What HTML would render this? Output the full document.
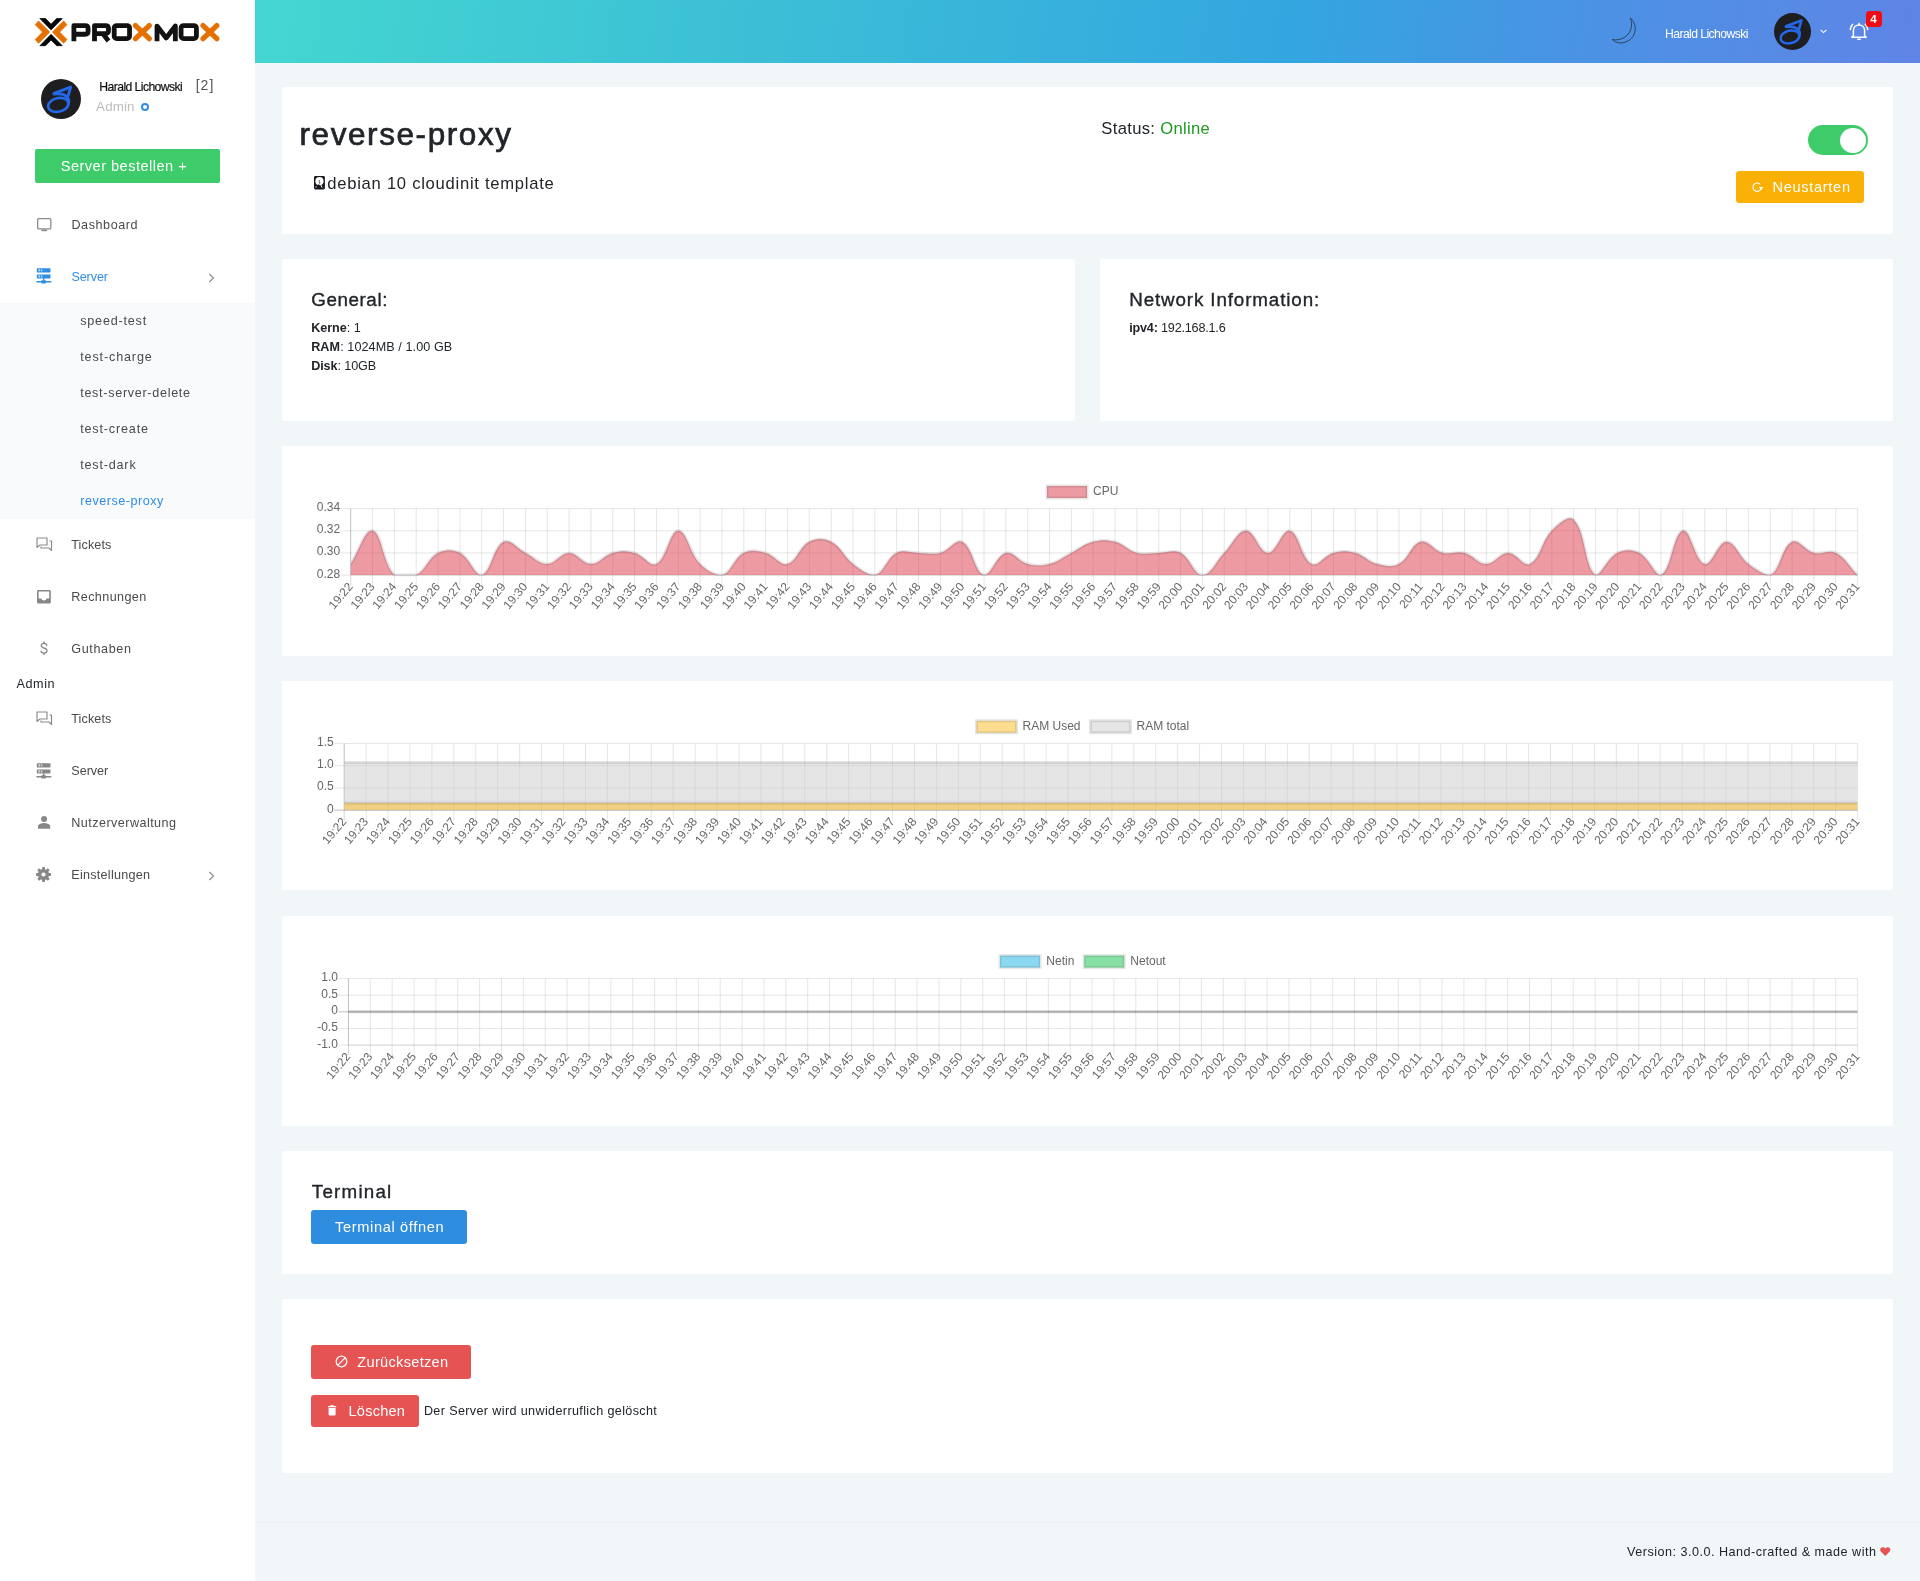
<!DOCTYPE html>
<html lang="de">
<head>
<meta charset="utf-8">
<title>reverse-proxy</title>
<style>
html,body{margin:0;padding:0}
body{width:1920px;height:1581px;position:relative;overflow:hidden;background:#f1f6f9;font-family:"Liberation Sans",sans-serif;color:#212529}
.abs{position:absolute}
.t{position:absolute;white-space:pre;font-family:"Liberation Sans",sans-serif}
.t b{font-weight:700}
.sidebar{position:absolute;left:0;top:0;width:255px;height:1581px;background:#fff}
.submenu{position:absolute;left:0;top:303px;width:255px;height:215.5px;background:#f9fafc}
.topbar{position:absolute;left:255px;top:0;width:1665px;height:63px;background:linear-gradient(100deg,#44d7d1 0%,#3cbfd6 30%,#33a6e0 62%,#4b92e4 80%,#5f84e6 100%)}
.card{position:absolute;background:#fff;border-radius:2px}
.btn{position:absolute;border-radius:3px}
.charts{position:absolute;left:0;top:0}
.layer{position:absolute;left:0;top:0;width:1920px;height:1581px;will-change:transform}
.footline{position:absolute;left:255px;top:1522px;width:1665px;height:1px;background:#eef1f3}
svg{overflow:visible}
</style>
</head>
<body>
<!-- sidebar -->
<div class="sidebar"></div>
<div class="submenu"></div>
<!--LOGO-->
<!-- top bar -->
<div class="topbar"></div>
<!-- cards -->
<div class="card" style="left:282px;top:87px;width:1611px;height:146.5px"></div>
<div class="card" style="left:282px;top:259px;width:793px;height:161.5px"></div>
<div class="card" style="left:1100px;top:259px;width:793px;height:161.5px"></div>
<div class="card" style="left:282px;top:446px;width:1611px;height:209.6px"></div>
<div class="card" style="left:282px;top:680.8px;width:1611px;height:209.6px"></div>
<div class="card" style="left:282px;top:915.6px;width:1611px;height:210px"></div>
<div class="card" style="left:282px;top:1151px;width:1611px;height:122.6px"></div>
<div class="card" style="left:282px;top:1299.3px;width:1611px;height:173.500px"></div>
<div class="footline"></div>
<!-- buttons -->
<div class="btn" style="left:35px;top:149.3px;width:185px;height:33.4px;background:#3ecc6b;border-radius:2px"></div>
<div class="btn" style="left:1736px;top:171px;width:128px;height:32px;background:#fbb005"></div>
<div class="btn" style="left:311px;top:1210px;width:156px;height:33.7px;background:#2f8de0"></div>
<div class="btn" style="left:311px;top:1344.8px;width:160px;height:34px;background:#e55353"></div>
<div class="btn" style="left:311px;top:1394.9px;width:108px;height:32.200px;background:#e55353"></div>
<!-- toggle -->
<div class="abs" style="left:1808px;top:124.8px;width:60px;height:30.2px;border-radius:16px;background:#3ecc6b"></div>
<div class="abs" style="left:1840px;top:127.5px;width:26px;height:25.6px;border-radius:13px;background:#fff"></div>
<!-- logo -->
<svg class="abs" style="left:0;top:0" width="255" height="63" viewBox="0 0 255 63">
 <g fill="#e57000" stroke="#e57000" stroke-width="0.9" stroke-linejoin="round">
  <polygon points="49.70,32.10 38.50,21.00 35.30,24.70 42.60,32.10 35.30,39.50 38.50,43.20"/>
  <polygon points="52.46,32.10 63.66,21.00 66.86,24.70 59.56,32.10 66.86,39.50 63.66,43.20"/>
 </g>
 <g fill="#000" stroke="#000" stroke-width="0.7" stroke-linejoin="round">
  <polygon points="39.90,18.50 45.50,18.50 51.08,24.20 56.66,18.50 62.26,18.50 51.08,29.90"/>
  <polygon points="39.90,45.70 45.50,45.70 51.08,40.00 56.66,45.70 62.26,45.70 51.08,34.30"/>
 </g>
</svg>
<svg class="abs" style="left:20px;top:10px" width="220" height="45" viewBox="0 0 1920 393">
 <g fill="none" stroke="#111" stroke-width="42" stroke-linejoin="round">
  <path d="M470,272V136H568Q594,136 594,160V186Q594,212 568,212H470"/>
  <path d="M650,272V136H746Q772,136 772,160V182Q772,206 746,206H650M722,206L772,270"/>
  <rect x="822" y="136" width="134" height="114" rx="22"/>
  <path d="M1196,272V140L1276,244L1356,140V272"/>
  <rect x="1406" y="136" width="134" height="114" rx="22"/>
 </g>
 <g fill="none" stroke="#e57000" stroke-width="46" stroke-linecap="round">
  <path d="M1008,136L1128,250M1128,136L1008,250"/>
  <path d="M1598,136L1718,250M1718,136L1598,250"/>
 </g>
</svg>
<!-- sidebar avatar -->
<svg class="abs" style="left:41px;top:79px" width="40" height="40" viewBox="0 0 40 40">
 <circle cx="20" cy="20" r="20" fill="#1e1e20"/>
 <g id="swirl" fill="none" stroke="#2467e8" stroke-linecap="round" stroke-linejoin="round">
  <ellipse cx="17.300" cy="25.900" rx="10.300" ry="6.800" transform="rotate(-13 17.300 25.900)" stroke-width="2.700"/>
  <path d="M13.200,15C18.500,14.400 23,15.200 25.600,17.600C27.600,19.600 28.100,22.400 27.200,24.800" stroke-width="3.100"/>
  <path d="M13,14.400L29.600,8.100L27.300,16.400" stroke-width="2.900"/>
 </g>
</svg>
<!-- blue ring -->
<div class="abs" style="left:140.9px;top:103px;width:4px;height:4px;border:2px solid #2f8de4;border-radius:50%"></div>
<!-- topbar avatar -->
<svg class="abs" style="left:1774px;top:12.6px" width="37" height="37" viewBox="0 0 40 40">
 <circle cx="20" cy="20" r="20" fill="#1e1e20"/>
 <use href="#swirl"/>
</svg>
<!-- moon -->
<svg class="abs" style="left:1610px;top:16px" width="30" height="30" viewBox="0 0 30 30">
 <path d="M20.300,1.900C27.800,8.600 26.800,20.600 17.200,25.400C11.600,28.100 5.600,27 2.200,23.500C11.300,25.600 20.600,19.400 21.500,10.200C21.800,7 21.300,4 20.300,1.900Z" fill="none" stroke="#2b3a4a" stroke-width="0.900" stroke-linejoin="round"/>
</svg>
<!-- chevron down -->
<svg class="abs" style="left:1819.5px;top:28.5px" width="7" height="5" viewBox="0 0 7 5"><path d="M0.6,0.8L3.5,3.6L6.4,0.8" fill="none" stroke="#fff" stroke-width="1.1"/></svg>
<!-- bell -->
<svg class="abs" style="left:1849px;top:22px" width="20" height="19" viewBox="0 0 20 19">
 <g fill="none" stroke="#fff" stroke-width="1.5" stroke-linecap="round" stroke-linejoin="round">
  <path d="M4.4,14V8.6C4.4,5.2 6.8,3 10,3C13.200,3 15.600,5.200 15.600,8.600V14L17.200,15.200H2.800Z"/>
  <path d="M10,3V1.600"/>
  <path d="M8.800,17.200H11.200"/>
  <path d="M3.600,2.400C2.200,3.800 1.400,5.600 1.300,7.600"/>
  <path d="M16.400,2.400C17.800,3.800 18.600,5.600 18.700,7.600"/>
 </g>
</svg>
<!-- badge -->
<div class="abs" style="left:1866px;top:11px;width:16px;height:16px;border-radius:3.5px;background:#f00c14"></div>
<!-- menu icons -->
<!-- dashboard monitor -->
<svg class="abs" style="left:36.800px;top:217.600px" width="14.600" height="13.400" viewBox="0 0 14.600 13.400">
 <rect x="0.650" y="0.650" width="13.200" height="10.300" rx="1" fill="none" stroke="#8a8a8a" stroke-width="1.300"/>
 <rect x="4.300" y="11.500" width="5.900" height="1.700" fill="#8a8a8a"/>
</svg>
<!-- server network (blue) -->
<svg class="abs" style="left:36px;top:268.100px" width="16" height="16" viewBox="0 0 16 16">
 <g fill="#2f8de4">
  <rect x="0.8" y="0.2" width="13.7" height="4.3" rx="0.7"/>
  <rect x="0.8" y="6.4" width="13.7" height="4.1" rx="0.7"/>
  <rect x="6.9" y="10.4" width="1.5" height="3"/>
  <rect x="0.3" y="13.0" width="15.1" height="1.4" rx="0.4"/>
  <rect x="5.3" y="12.2" width="4.6" height="3.4" rx="0.6"/>
 </g>
 <g fill="#fff"><rect x="2.6" y="1.3" width="1.1" height="2.1"/><rect x="4.8" y="1.3" width="1.5" height="2.1" opacity="0.6"/><rect x="2.6" y="7.4" width="1.1" height="2.1"/><rect x="4.8" y="7.4" width="1.5" height="2.1" opacity="0.6"/></g>
</svg>
<!-- server network (gray) -->
<svg class="abs" style="left:36.200px;top:762.600px" width="16" height="16" viewBox="0 0 16 16">
 <g fill="#878787">
  <rect x="0.8" y="0.2" width="13.7" height="4.3" rx="0.7"/>
  <rect x="0.8" y="6.4" width="13.7" height="4.1" rx="0.7"/>
  <rect x="6.9" y="10.4" width="1.5" height="3"/>
  <rect x="0.3" y="13.0" width="15.1" height="1.4" rx="0.4"/>
  <rect x="5.3" y="12.2" width="4.6" height="3.4" rx="0.6"/>
 </g>
 <g fill="#fff"><rect x="2.6" y="1.3" width="1.1" height="2.1"/><rect x="4.8" y="1.3" width="1.5" height="2.1" opacity="0.6"/><rect x="2.6" y="7.4" width="1.1" height="2.1"/><rect x="4.8" y="7.4" width="1.5" height="2.1" opacity="0.6"/></g>
</svg>
<!-- tickets (forum outline) x2 -->
<svg class="abs" style="left:36px;top:537px" width="16.500" height="14" viewBox="0 0 33 28" id="forum">
 <g fill="none" stroke="#8a8a8a" stroke-width="2.300" stroke-linejoin="round">
  <path d="M2,2H22V16H8L2,21Z"/>
  <path d="M27,8H31V27L26,22H10V19"/>
 </g>
</svg>
<svg class="abs" style="left:36px;top:711px" width="16.500" height="14" viewBox="0 0 33 28">
 <g fill="none" stroke="#8a8a8a" stroke-width="2.300" stroke-linejoin="round">
  <path d="M2,2H22V16H8L2,21Z"/>
  <path d="M27,8H31V27L26,22H10V19"/>
 </g>
</svg>
<!-- rechnungen (inbox) -->
<svg class="abs" style="left:37.300px;top:589.600px" width="13.800" height="13.600" viewBox="0 0 138 136">
 <path d="M14,0H124Q138,0 138,14V122Q138,136 124,136H14Q0,136 0,122V14Q0,0 14,0ZM16,16V86H44C44,112 94,112 94,86H122V16Z" fill="#878787" fill-rule="evenodd"/>
</svg>
<!-- guthaben $ -->
<svg class="abs" style="left:39.700px;top:640.900px" width="8" height="14.400" viewBox="0 0 8 14.400">
 <g fill="none" stroke="#868686" stroke-width="1.250">
  <path d="M6.850,4.700C6.700,3.250 5.600,2.400 4,2.400C2.300,2.400 1.200,3.300 1.200,4.600C1.200,6 2.400,6.550 4.100,7.050C5.900,7.600 7,8.300 7,9.800C7,11.200 5.800,12.050 4,12.050C2.200,12.050 1,11.200 0.900,9.700"/>
  <path d="M4,0.300V2.400M4,12.050V14.100"/>
 </g>
</svg>
<!-- nutzer (person) -->
<svg class="abs" style="left:38px;top:816px" width="12.200" height="12.800" viewBox="0 0 122 128">
 <circle cx="61" cy="30" r="30" fill="#878787"/>
 <path d="M0,128V104C0,80 40,70 61,70C82,70 122,80 122,104V128Z" fill="#878787"/>
</svg>
<!-- settings gear -->
<svg class="abs" style="left:36px;top:867px" width="15" height="15" viewBox="-50 -50 100 100">
 <g fill="#878787">
  <circle r="37"/>
  <g id="teeth"><rect x="-9.500" y="-50" width="19" height="100" rx="3"/></g>
  <use href="#teeth" transform="rotate(45)"/><use href="#teeth" transform="rotate(90)"/><use href="#teeth" transform="rotate(135)"/>
 </g>
 <circle r="14" fill="#fff"/>
</svg>
<!-- chevrons right -->
<svg class="abs" style="left:207.500px;top:272.500px" width="7" height="10" viewBox="0 0 7 10"><path d="M1.300,1L5.600,5L1.300,9" fill="none" stroke="#8a8a8a" stroke-width="1.100"/></svg>
<svg class="abs" style="left:207.500px;top:870.500px" width="7" height="10" viewBox="0 0 7 10"><path d="M1.300,1L5.600,5L1.300,9" fill="none" stroke="#8a8a8a" stroke-width="1.100"/></svg>
<!-- template icon (hdd) -->
<svg class="abs" style="left:313.800px;top:176.300px" width="10.900" height="13.400" viewBox="0 0 110 135" preserveAspectRatio="none">
 <path d="M14,0H96Q110,0 110,14V121Q110,135 96,135H14Q0,135 0,121V14Q0,0 14,0Z" fill="#16191d"/>
 <circle cx="55" cy="52" r="41" fill="#fff"/>
 <circle cx="54" cy="50" r="6" fill="#16191d"/>
 <circle cx="57" cy="71" r="8" fill="#16191d"/>
 <path d="M5,122L50,80L70,122Z" fill="#16191d"/>
 <path d="M61,75L80,113" stroke="#fff" stroke-width="10" stroke-linecap="round"/>
 <rect x="12" y="106" width="16" height="8" fill="#fff"/>
</svg>
<!-- neustarten icon -->
<svg class="abs" style="left:1750.500px;top:180.500px" width="13" height="13" viewBox="0 0 13 13">
 <path d="M10.200,7.200A4.200,4.200 0 1 1 9.300,3.400" fill="none" stroke="#fff" stroke-width="1.150"/>
 <path d="M7.800,6.100H12.400L10.100,9Z" fill="#fff"/>
</svg>
<!-- zuruecksetzen icon -->
<svg class="abs" style="left:335px;top:1355.300px" width="13" height="13" viewBox="0 0 13 13">
 <circle cx="6.500" cy="6.500" r="5.300" fill="none" stroke="#fff" stroke-width="1.300"/>
 <path d="M2.900,10.100L10.100,2.900" stroke="#fff" stroke-width="1.300"/>
</svg>
<!-- loeschen icon -->
<svg class="abs" style="left:328.200px;top:1405px" width="8.200" height="10.600" viewBox="0 0 84 116" preserveAspectRatio="none">
 <path d="M0,12H24L30,0H54L60,12H84V24H0Z" fill="#fff"/>
 <path d="M6,32H78V104Q78,116 66,116H18Q6,116 6,104Z" fill="#fff"/>
</svg>
<!-- heart -->
<svg class="abs" style="left:1880px;top:1546.800px" width="10.500" height="9.200" viewBox="0 0 22 20" preserveAspectRatio="none">
 <path d="M11,19.500L2.200,10.600C-0.600,7.800 -0.300,3.600 2.400,1.600C5.100,-0.400 8.800,0.300 11,3.400C13.200,0.300 16.900,-0.400 19.600,1.600C22.300,3.600 22.600,7.800 19.800,10.600Z" fill="#e55353"/>
</svg>

<div class="layer">
<svg class="charts" width="1920" height="1581" viewBox="0 0 1920 1581" font-family="'Liberation Sans', sans-serif" font-size="12" fill="#666">
<g id="c1">
<clipPath id="clipc1"><rect x="350.7" y="507.1" width="1506.8999999999999" height="69.5"/></clipPath>
<line x1="350.70" x2="350.70" y1="508.60" y2="585.10" stroke="rgba(0,0,0,0.17)" stroke-width="1"/>
<line x1="372.54" x2="372.54" y1="508.60" y2="585.10" stroke="rgba(0,0,0,0.1)" stroke-width="1"/>
<line x1="394.38" x2="394.38" y1="508.60" y2="585.10" stroke="rgba(0,0,0,0.1)" stroke-width="1"/>
<line x1="416.22" x2="416.22" y1="508.60" y2="585.10" stroke="rgba(0,0,0,0.1)" stroke-width="1"/>
<line x1="438.06" x2="438.06" y1="508.60" y2="585.10" stroke="rgba(0,0,0,0.1)" stroke-width="1"/>
<line x1="459.90" x2="459.90" y1="508.60" y2="585.10" stroke="rgba(0,0,0,0.1)" stroke-width="1"/>
<line x1="481.73" x2="481.73" y1="508.60" y2="585.10" stroke="rgba(0,0,0,0.1)" stroke-width="1"/>
<line x1="503.57" x2="503.57" y1="508.60" y2="585.10" stroke="rgba(0,0,0,0.1)" stroke-width="1"/>
<line x1="525.41" x2="525.41" y1="508.60" y2="585.10" stroke="rgba(0,0,0,0.1)" stroke-width="1"/>
<line x1="547.25" x2="547.25" y1="508.60" y2="585.10" stroke="rgba(0,0,0,0.1)" stroke-width="1"/>
<line x1="569.09" x2="569.09" y1="508.60" y2="585.10" stroke="rgba(0,0,0,0.1)" stroke-width="1"/>
<line x1="590.93" x2="590.93" y1="508.60" y2="585.10" stroke="rgba(0,0,0,0.1)" stroke-width="1"/>
<line x1="612.77" x2="612.77" y1="508.60" y2="585.10" stroke="rgba(0,0,0,0.1)" stroke-width="1"/>
<line x1="634.61" x2="634.61" y1="508.60" y2="585.10" stroke="rgba(0,0,0,0.1)" stroke-width="1"/>
<line x1="656.45" x2="656.45" y1="508.60" y2="585.10" stroke="rgba(0,0,0,0.1)" stroke-width="1"/>
<line x1="678.29" x2="678.29" y1="508.60" y2="585.10" stroke="rgba(0,0,0,0.1)" stroke-width="1"/>
<line x1="700.13" x2="700.13" y1="508.60" y2="585.10" stroke="rgba(0,0,0,0.1)" stroke-width="1"/>
<line x1="721.97" x2="721.97" y1="508.60" y2="585.10" stroke="rgba(0,0,0,0.1)" stroke-width="1"/>
<line x1="743.80" x2="743.80" y1="508.60" y2="585.10" stroke="rgba(0,0,0,0.1)" stroke-width="1"/>
<line x1="765.64" x2="765.64" y1="508.60" y2="585.10" stroke="rgba(0,0,0,0.1)" stroke-width="1"/>
<line x1="787.48" x2="787.48" y1="508.60" y2="585.10" stroke="rgba(0,0,0,0.1)" stroke-width="1"/>
<line x1="809.32" x2="809.32" y1="508.60" y2="585.10" stroke="rgba(0,0,0,0.1)" stroke-width="1"/>
<line x1="831.16" x2="831.16" y1="508.60" y2="585.10" stroke="rgba(0,0,0,0.1)" stroke-width="1"/>
<line x1="853.00" x2="853.00" y1="508.60" y2="585.10" stroke="rgba(0,0,0,0.1)" stroke-width="1"/>
<line x1="874.84" x2="874.84" y1="508.60" y2="585.10" stroke="rgba(0,0,0,0.1)" stroke-width="1"/>
<line x1="896.68" x2="896.68" y1="508.60" y2="585.10" stroke="rgba(0,0,0,0.1)" stroke-width="1"/>
<line x1="918.52" x2="918.52" y1="508.60" y2="585.10" stroke="rgba(0,0,0,0.1)" stroke-width="1"/>
<line x1="940.36" x2="940.36" y1="508.60" y2="585.10" stroke="rgba(0,0,0,0.1)" stroke-width="1"/>
<line x1="962.20" x2="962.20" y1="508.60" y2="585.10" stroke="rgba(0,0,0,0.1)" stroke-width="1"/>
<line x1="984.03" x2="984.03" y1="508.60" y2="585.10" stroke="rgba(0,0,0,0.1)" stroke-width="1"/>
<line x1="1005.87" x2="1005.87" y1="508.60" y2="585.10" stroke="rgba(0,0,0,0.1)" stroke-width="1"/>
<line x1="1027.71" x2="1027.71" y1="508.60" y2="585.10" stroke="rgba(0,0,0,0.1)" stroke-width="1"/>
<line x1="1049.55" x2="1049.55" y1="508.60" y2="585.10" stroke="rgba(0,0,0,0.1)" stroke-width="1"/>
<line x1="1071.39" x2="1071.39" y1="508.60" y2="585.10" stroke="rgba(0,0,0,0.1)" stroke-width="1"/>
<line x1="1093.23" x2="1093.23" y1="508.60" y2="585.10" stroke="rgba(0,0,0,0.1)" stroke-width="1"/>
<line x1="1115.07" x2="1115.07" y1="508.60" y2="585.10" stroke="rgba(0,0,0,0.1)" stroke-width="1"/>
<line x1="1136.91" x2="1136.91" y1="508.60" y2="585.10" stroke="rgba(0,0,0,0.1)" stroke-width="1"/>
<line x1="1158.75" x2="1158.75" y1="508.60" y2="585.10" stroke="rgba(0,0,0,0.1)" stroke-width="1"/>
<line x1="1180.59" x2="1180.59" y1="508.60" y2="585.10" stroke="rgba(0,0,0,0.1)" stroke-width="1"/>
<line x1="1202.43" x2="1202.43" y1="508.60" y2="585.10" stroke="rgba(0,0,0,0.1)" stroke-width="1"/>
<line x1="1224.27" x2="1224.27" y1="508.60" y2="585.10" stroke="rgba(0,0,0,0.1)" stroke-width="1"/>
<line x1="1246.10" x2="1246.10" y1="508.60" y2="585.10" stroke="rgba(0,0,0,0.1)" stroke-width="1"/>
<line x1="1267.94" x2="1267.94" y1="508.60" y2="585.10" stroke="rgba(0,0,0,0.1)" stroke-width="1"/>
<line x1="1289.78" x2="1289.78" y1="508.60" y2="585.10" stroke="rgba(0,0,0,0.1)" stroke-width="1"/>
<line x1="1311.62" x2="1311.62" y1="508.60" y2="585.10" stroke="rgba(0,0,0,0.1)" stroke-width="1"/>
<line x1="1333.46" x2="1333.46" y1="508.60" y2="585.10" stroke="rgba(0,0,0,0.1)" stroke-width="1"/>
<line x1="1355.30" x2="1355.30" y1="508.60" y2="585.10" stroke="rgba(0,0,0,0.1)" stroke-width="1"/>
<line x1="1377.14" x2="1377.14" y1="508.60" y2="585.10" stroke="rgba(0,0,0,0.1)" stroke-width="1"/>
<line x1="1398.98" x2="1398.98" y1="508.60" y2="585.10" stroke="rgba(0,0,0,0.1)" stroke-width="1"/>
<line x1="1420.82" x2="1420.82" y1="508.60" y2="585.10" stroke="rgba(0,0,0,0.1)" stroke-width="1"/>
<line x1="1442.66" x2="1442.66" y1="508.60" y2="585.10" stroke="rgba(0,0,0,0.1)" stroke-width="1"/>
<line x1="1464.50" x2="1464.50" y1="508.60" y2="585.10" stroke="rgba(0,0,0,0.1)" stroke-width="1"/>
<line x1="1486.33" x2="1486.33" y1="508.60" y2="585.10" stroke="rgba(0,0,0,0.1)" stroke-width="1"/>
<line x1="1508.17" x2="1508.17" y1="508.60" y2="585.10" stroke="rgba(0,0,0,0.1)" stroke-width="1"/>
<line x1="1530.01" x2="1530.01" y1="508.60" y2="585.10" stroke="rgba(0,0,0,0.1)" stroke-width="1"/>
<line x1="1551.85" x2="1551.85" y1="508.60" y2="585.10" stroke="rgba(0,0,0,0.1)" stroke-width="1"/>
<line x1="1573.69" x2="1573.69" y1="508.60" y2="585.10" stroke="rgba(0,0,0,0.1)" stroke-width="1"/>
<line x1="1595.53" x2="1595.53" y1="508.60" y2="585.10" stroke="rgba(0,0,0,0.1)" stroke-width="1"/>
<line x1="1617.37" x2="1617.37" y1="508.60" y2="585.10" stroke="rgba(0,0,0,0.1)" stroke-width="1"/>
<line x1="1639.21" x2="1639.21" y1="508.60" y2="585.10" stroke="rgba(0,0,0,0.1)" stroke-width="1"/>
<line x1="1661.05" x2="1661.05" y1="508.60" y2="585.10" stroke="rgba(0,0,0,0.1)" stroke-width="1"/>
<line x1="1682.89" x2="1682.89" y1="508.60" y2="585.10" stroke="rgba(0,0,0,0.1)" stroke-width="1"/>
<line x1="1704.73" x2="1704.73" y1="508.60" y2="585.10" stroke="rgba(0,0,0,0.1)" stroke-width="1"/>
<line x1="1726.57" x2="1726.57" y1="508.60" y2="585.10" stroke="rgba(0,0,0,0.1)" stroke-width="1"/>
<line x1="1748.40" x2="1748.40" y1="508.60" y2="585.10" stroke="rgba(0,0,0,0.1)" stroke-width="1"/>
<line x1="1770.24" x2="1770.24" y1="508.60" y2="585.10" stroke="rgba(0,0,0,0.1)" stroke-width="1"/>
<line x1="1792.08" x2="1792.08" y1="508.60" y2="585.10" stroke="rgba(0,0,0,0.1)" stroke-width="1"/>
<line x1="1813.92" x2="1813.92" y1="508.60" y2="585.10" stroke="rgba(0,0,0,0.1)" stroke-width="1"/>
<line x1="1835.76" x2="1835.76" y1="508.60" y2="585.10" stroke="rgba(0,0,0,0.1)" stroke-width="1"/>
<line x1="1857.60" x2="1857.60" y1="508.60" y2="585.10" stroke="rgba(0,0,0,0.1)" stroke-width="1"/>
<line x1="340.70" x2="1857.60" y1="508.60" y2="508.60" stroke="rgba(0,0,0,0.1)" stroke-width="1"/>
<line x1="340.70" x2="1857.60" y1="530.77" y2="530.77" stroke="rgba(0,0,0,0.1)" stroke-width="1"/>
<line x1="340.70" x2="1857.60" y1="552.93" y2="552.93" stroke="rgba(0,0,0,0.1)" stroke-width="1"/>
<line x1="340.70" x2="1857.60" y1="575.10" y2="575.10" stroke="rgba(0,0,0,0.1)" stroke-width="1"/>
<line x1="350.70" x2="350.70" y1="508.60" y2="575.10" stroke="rgba(0,0,0,0.1)" stroke-width="1"/>
<line x1="350.70" x2="1857.60" y1="575.10" y2="575.10" stroke="rgba(0,0,0,0.1)" stroke-width="1"/>
<g clip-path="url(#clipc1)">
<path d="M350.70,564.02C359.44,550.72 364.75,528.79 372.54,530.77C382.22,533.22 382.26,562.80 394.38,575.10C399.73,575.10 409.01,575.10 416.22,575.10C426.48,569.89 427.79,558.14 438.06,552.93C445.26,549.28 452.69,549.28 459.90,552.93C470.16,558.14 474.07,575.10 481.73,575.10C491.54,572.61 492.76,547.34 503.57,541.85C510.23,538.47 516.68,548.50 525.41,552.93C534.15,557.37 538.52,564.02 547.25,564.02C555.99,564.02 560.36,552.93 569.09,552.93C577.83,552.93 582.19,564.02 590.93,564.02C599.67,564.02 603.53,555.28 612.77,552.93C621.01,550.84 626.37,550.84 634.61,552.93C643.84,555.28 649.79,567.40 656.45,564.02C667.26,558.53 669.55,530.77 678.29,530.77C687.02,530.77 689.31,553.04 700.13,564.02C706.78,570.77 714.27,575.10 721.97,575.10C731.74,572.62 733.54,558.14 743.80,552.93C751.01,549.28 757.41,550.84 765.64,552.93C774.88,555.28 779.79,565.97 787.48,564.02C797.26,561.54 799.06,547.06 809.32,541.85C816.53,538.19 823.96,538.19 831.16,541.85C841.43,547.06 843.22,556.57 853.00,564.02C860.69,569.87 867.14,575.10 874.84,575.10C884.62,572.62 886.41,558.14 896.68,552.93C903.88,549.28 909.78,552.93 918.52,552.93C927.25,552.93 932.12,555.02 940.36,552.93C949.59,550.59 955.54,538.47 962.20,541.85C973.01,547.34 974.23,572.61 984.03,575.10C991.70,575.10 996.10,555.41 1005.87,552.93C1013.57,550.98 1018.48,561.67 1027.71,564.02C1035.95,566.11 1041.32,566.11 1049.55,564.02C1058.79,561.67 1062.66,557.37 1071.39,552.93C1080.13,548.50 1083.99,544.19 1093.23,541.85C1101.47,539.76 1106.83,539.76 1115.07,541.85C1124.31,544.19 1127.67,550.59 1136.91,552.93C1145.14,555.02 1150.01,552.93 1158.75,552.93C1167.48,552.93 1173.38,549.28 1180.59,552.93C1190.85,558.14 1193.69,575.10 1202.43,575.10C1211.16,575.10 1215.53,561.80 1224.27,552.93C1233.00,544.07 1237.37,530.77 1246.10,530.77C1254.84,530.77 1259.21,552.93 1267.94,552.93C1276.68,552.93 1282.11,528.82 1289.78,530.77C1299.59,533.25 1300.81,558.53 1311.62,564.02C1318.28,567.40 1324.23,555.28 1333.46,552.93C1341.70,550.84 1347.06,550.84 1355.30,552.93C1364.54,555.28 1367.90,561.67 1377.14,564.02C1385.37,566.11 1391.77,567.67 1398.98,564.02C1409.24,558.81 1411.04,544.33 1420.82,541.85C1428.51,539.90 1433.42,550.59 1442.66,552.93C1450.89,555.02 1456.26,550.84 1464.50,552.93C1473.73,555.28 1477.60,564.02 1486.33,564.02C1495.07,564.02 1499.44,552.93 1508.17,552.93C1516.91,552.93 1523.36,567.40 1530.01,564.02C1540.83,558.53 1541.04,541.74 1551.85,530.77C1558.51,524.01 1568.60,514.52 1573.69,519.68C1586.07,532.25 1584.05,566.36 1595.53,575.10C1601.53,575.10 1607.10,558.14 1617.37,552.93C1624.57,549.28 1632.00,549.28 1639.21,552.93C1649.47,558.14 1654.30,575.10 1661.05,575.10C1671.77,569.66 1673.21,533.22 1682.89,530.77C1690.68,528.79 1694.92,561.53 1704.73,564.02C1712.39,565.96 1717.83,541.85 1726.57,541.85C1735.30,541.85 1738.63,556.57 1748.40,564.02C1756.10,569.87 1763.59,575.10 1770.24,575.10C1781.06,569.61 1781.27,547.34 1792.08,541.85C1798.74,538.47 1804.69,550.59 1813.92,552.93C1822.16,555.02 1828.56,549.28 1835.76,552.93C1846.03,558.14 1848.86,566.23 1857.60,575.10L1857.60,575.10L350.70,575.10Z" fill="rgba(220,53,69,0.5)"/>
<path d="M350.70,564.02C359.44,550.72 364.75,528.79 372.54,530.77C382.22,533.22 382.26,562.80 394.38,575.10C399.73,575.10 409.01,575.10 416.22,575.10C426.48,569.89 427.79,558.14 438.06,552.93C445.26,549.28 452.69,549.28 459.90,552.93C470.16,558.14 474.07,575.10 481.73,575.10C491.54,572.61 492.76,547.34 503.57,541.85C510.23,538.47 516.68,548.50 525.41,552.93C534.15,557.37 538.52,564.02 547.25,564.02C555.99,564.02 560.36,552.93 569.09,552.93C577.83,552.93 582.19,564.02 590.93,564.02C599.67,564.02 603.53,555.28 612.77,552.93C621.01,550.84 626.37,550.84 634.61,552.93C643.84,555.28 649.79,567.40 656.45,564.02C667.26,558.53 669.55,530.77 678.29,530.77C687.02,530.77 689.31,553.04 700.13,564.02C706.78,570.77 714.27,575.10 721.97,575.10C731.74,572.62 733.54,558.14 743.80,552.93C751.01,549.28 757.41,550.84 765.64,552.93C774.88,555.28 779.79,565.97 787.48,564.02C797.26,561.54 799.06,547.06 809.32,541.85C816.53,538.19 823.96,538.19 831.16,541.85C841.43,547.06 843.22,556.57 853.00,564.02C860.69,569.87 867.14,575.10 874.84,575.10C884.62,572.62 886.41,558.14 896.68,552.93C903.88,549.28 909.78,552.93 918.52,552.93C927.25,552.93 932.12,555.02 940.36,552.93C949.59,550.59 955.54,538.47 962.20,541.85C973.01,547.34 974.23,572.61 984.03,575.10C991.70,575.10 996.10,555.41 1005.87,552.93C1013.57,550.98 1018.48,561.67 1027.71,564.02C1035.95,566.11 1041.32,566.11 1049.55,564.02C1058.79,561.67 1062.66,557.37 1071.39,552.93C1080.13,548.50 1083.99,544.19 1093.23,541.85C1101.47,539.76 1106.83,539.76 1115.07,541.85C1124.31,544.19 1127.67,550.59 1136.91,552.93C1145.14,555.02 1150.01,552.93 1158.75,552.93C1167.48,552.93 1173.38,549.28 1180.59,552.93C1190.85,558.14 1193.69,575.10 1202.43,575.10C1211.16,575.10 1215.53,561.80 1224.27,552.93C1233.00,544.07 1237.37,530.77 1246.10,530.77C1254.84,530.77 1259.21,552.93 1267.94,552.93C1276.68,552.93 1282.11,528.82 1289.78,530.77C1299.59,533.25 1300.81,558.53 1311.62,564.02C1318.28,567.40 1324.23,555.28 1333.46,552.93C1341.70,550.84 1347.06,550.84 1355.30,552.93C1364.54,555.28 1367.90,561.67 1377.14,564.02C1385.37,566.11 1391.77,567.67 1398.98,564.02C1409.24,558.81 1411.04,544.33 1420.82,541.85C1428.51,539.90 1433.42,550.59 1442.66,552.93C1450.89,555.02 1456.26,550.84 1464.50,552.93C1473.73,555.28 1477.60,564.02 1486.33,564.02C1495.07,564.02 1499.44,552.93 1508.17,552.93C1516.91,552.93 1523.36,567.40 1530.01,564.02C1540.83,558.53 1541.04,541.74 1551.85,530.77C1558.51,524.01 1568.60,514.52 1573.69,519.68C1586.07,532.25 1584.05,566.36 1595.53,575.10C1601.53,575.10 1607.10,558.14 1617.37,552.93C1624.57,549.28 1632.00,549.28 1639.21,552.93C1649.47,558.14 1654.30,575.10 1661.05,575.10C1671.77,569.66 1673.21,533.22 1682.89,530.77C1690.68,528.79 1694.92,561.53 1704.73,564.02C1712.39,565.96 1717.83,541.85 1726.57,541.85C1735.30,541.85 1738.63,556.57 1748.40,564.02C1756.10,569.87 1763.59,575.10 1770.24,575.10C1781.06,569.61 1781.27,547.34 1792.08,541.85C1798.74,538.47 1804.69,550.59 1813.92,552.93C1822.16,555.02 1828.56,549.28 1835.76,552.93C1846.03,558.14 1848.86,566.23 1857.60,575.10" fill="none" stroke="rgba(0,0,0,0.1)" stroke-width="3" stroke-linejoin="miter"/>
</g>
<text x="340.20" y="511.05" text-anchor="end">0.34</text>
<text x="340.20" y="533.22" text-anchor="end">0.32</text>
<text x="340.20" y="555.38" text-anchor="end">0.30</text>
<text x="340.20" y="577.55" text-anchor="end">0.28</text>
<text transform="translate(350.20,584.20) rotate(-50)" text-anchor="end" y="4.2">19:22</text>
<text transform="translate(372.04,584.20) rotate(-50)" text-anchor="end" y="4.2">19:23</text>
<text transform="translate(393.88,584.20) rotate(-50)" text-anchor="end" y="4.2">19:24</text>
<text transform="translate(415.72,584.20) rotate(-50)" text-anchor="end" y="4.2">19:25</text>
<text transform="translate(437.56,584.20) rotate(-50)" text-anchor="end" y="4.2">19:26</text>
<text transform="translate(459.40,584.20) rotate(-50)" text-anchor="end" y="4.2">19:27</text>
<text transform="translate(481.23,584.20) rotate(-50)" text-anchor="end" y="4.2">19:28</text>
<text transform="translate(503.07,584.20) rotate(-50)" text-anchor="end" y="4.2">19:29</text>
<text transform="translate(524.91,584.20) rotate(-50)" text-anchor="end" y="4.2">19:30</text>
<text transform="translate(546.75,584.20) rotate(-50)" text-anchor="end" y="4.2">19:31</text>
<text transform="translate(568.59,584.20) rotate(-50)" text-anchor="end" y="4.2">19:32</text>
<text transform="translate(590.43,584.20) rotate(-50)" text-anchor="end" y="4.2">19:33</text>
<text transform="translate(612.27,584.20) rotate(-50)" text-anchor="end" y="4.2">19:34</text>
<text transform="translate(634.11,584.20) rotate(-50)" text-anchor="end" y="4.2">19:35</text>
<text transform="translate(655.95,584.20) rotate(-50)" text-anchor="end" y="4.2">19:36</text>
<text transform="translate(677.79,584.20) rotate(-50)" text-anchor="end" y="4.2">19:37</text>
<text transform="translate(699.63,584.20) rotate(-50)" text-anchor="end" y="4.2">19:38</text>
<text transform="translate(721.47,584.20) rotate(-50)" text-anchor="end" y="4.2">19:39</text>
<text transform="translate(743.30,584.20) rotate(-50)" text-anchor="end" y="4.2">19:40</text>
<text transform="translate(765.14,584.20) rotate(-50)" text-anchor="end" y="4.2">19:41</text>
<text transform="translate(786.98,584.20) rotate(-50)" text-anchor="end" y="4.2">19:42</text>
<text transform="translate(808.82,584.20) rotate(-50)" text-anchor="end" y="4.2">19:43</text>
<text transform="translate(830.66,584.20) rotate(-50)" text-anchor="end" y="4.2">19:44</text>
<text transform="translate(852.50,584.20) rotate(-50)" text-anchor="end" y="4.2">19:45</text>
<text transform="translate(874.34,584.20) rotate(-50)" text-anchor="end" y="4.2">19:46</text>
<text transform="translate(896.18,584.20) rotate(-50)" text-anchor="end" y="4.2">19:47</text>
<text transform="translate(918.02,584.20) rotate(-50)" text-anchor="end" y="4.2">19:48</text>
<text transform="translate(939.86,584.20) rotate(-50)" text-anchor="end" y="4.2">19:49</text>
<text transform="translate(961.70,584.20) rotate(-50)" text-anchor="end" y="4.2">19:50</text>
<text transform="translate(983.53,584.20) rotate(-50)" text-anchor="end" y="4.2">19:51</text>
<text transform="translate(1005.37,584.20) rotate(-50)" text-anchor="end" y="4.2">19:52</text>
<text transform="translate(1027.21,584.20) rotate(-50)" text-anchor="end" y="4.2">19:53</text>
<text transform="translate(1049.05,584.20) rotate(-50)" text-anchor="end" y="4.2">19:54</text>
<text transform="translate(1070.89,584.20) rotate(-50)" text-anchor="end" y="4.2">19:55</text>
<text transform="translate(1092.73,584.20) rotate(-50)" text-anchor="end" y="4.2">19:56</text>
<text transform="translate(1114.57,584.20) rotate(-50)" text-anchor="end" y="4.2">19:57</text>
<text transform="translate(1136.41,584.20) rotate(-50)" text-anchor="end" y="4.2">19:58</text>
<text transform="translate(1158.25,584.20) rotate(-50)" text-anchor="end" y="4.2">19:59</text>
<text transform="translate(1180.09,584.20) rotate(-50)" text-anchor="end" y="4.2">20:00</text>
<text transform="translate(1201.93,584.20) rotate(-50)" text-anchor="end" y="4.2">20:01</text>
<text transform="translate(1223.77,584.20) rotate(-50)" text-anchor="end" y="4.2">20:02</text>
<text transform="translate(1245.60,584.20) rotate(-50)" text-anchor="end" y="4.2">20:03</text>
<text transform="translate(1267.44,584.20) rotate(-50)" text-anchor="end" y="4.2">20:04</text>
<text transform="translate(1289.28,584.20) rotate(-50)" text-anchor="end" y="4.2">20:05</text>
<text transform="translate(1311.12,584.20) rotate(-50)" text-anchor="end" y="4.2">20:06</text>
<text transform="translate(1332.96,584.20) rotate(-50)" text-anchor="end" y="4.2">20:07</text>
<text transform="translate(1354.80,584.20) rotate(-50)" text-anchor="end" y="4.2">20:08</text>
<text transform="translate(1376.64,584.20) rotate(-50)" text-anchor="end" y="4.2">20:09</text>
<text transform="translate(1398.48,584.20) rotate(-50)" text-anchor="end" y="4.2">20:10</text>
<text transform="translate(1420.32,584.20) rotate(-50)" text-anchor="end" y="4.2">20:11</text>
<text transform="translate(1442.16,584.20) rotate(-50)" text-anchor="end" y="4.2">20:12</text>
<text transform="translate(1464.00,584.20) rotate(-50)" text-anchor="end" y="4.2">20:13</text>
<text transform="translate(1485.83,584.20) rotate(-50)" text-anchor="end" y="4.2">20:14</text>
<text transform="translate(1507.67,584.20) rotate(-50)" text-anchor="end" y="4.2">20:15</text>
<text transform="translate(1529.51,584.20) rotate(-50)" text-anchor="end" y="4.2">20:16</text>
<text transform="translate(1551.35,584.20) rotate(-50)" text-anchor="end" y="4.2">20:17</text>
<text transform="translate(1573.19,584.20) rotate(-50)" text-anchor="end" y="4.2">20:18</text>
<text transform="translate(1595.03,584.20) rotate(-50)" text-anchor="end" y="4.2">20:19</text>
<text transform="translate(1616.87,584.20) rotate(-50)" text-anchor="end" y="4.2">20:20</text>
<text transform="translate(1638.71,584.20) rotate(-50)" text-anchor="end" y="4.2">20:21</text>
<text transform="translate(1660.55,584.20) rotate(-50)" text-anchor="end" y="4.2">20:22</text>
<text transform="translate(1682.39,584.20) rotate(-50)" text-anchor="end" y="4.2">20:23</text>
<text transform="translate(1704.23,584.20) rotate(-50)" text-anchor="end" y="4.2">20:24</text>
<text transform="translate(1726.07,584.20) rotate(-50)" text-anchor="end" y="4.2">20:25</text>
<text transform="translate(1747.90,584.20) rotate(-50)" text-anchor="end" y="4.2">20:26</text>
<text transform="translate(1769.74,584.20) rotate(-50)" text-anchor="end" y="4.2">20:27</text>
<text transform="translate(1791.58,584.20) rotate(-50)" text-anchor="end" y="4.2">20:28</text>
<text transform="translate(1813.42,584.20) rotate(-50)" text-anchor="end" y="4.2">20:29</text>
<text transform="translate(1835.26,584.20) rotate(-50)" text-anchor="end" y="4.2">20:30</text>
<text transform="translate(1857.10,584.20) rotate(-50)" text-anchor="end" y="4.2">20:31</text>
<rect x="1047" y="486" width="40" height="12" fill="rgba(220,53,69,0.5)" stroke="rgba(0,0,0,0.1)" stroke-width="3"/>
<text x="1093" y="495">CPU</text>
</g>
<g id="c2">
<clipPath id="clipc2"><rect x="344.2" y="742.1" width="1513.3999999999999" height="69.5"/></clipPath>
<line x1="344.20" x2="344.20" y1="743.60" y2="820.10" stroke="rgba(0,0,0,0.17)" stroke-width="1"/>
<line x1="366.13" x2="366.13" y1="743.60" y2="820.10" stroke="rgba(0,0,0,0.1)" stroke-width="1"/>
<line x1="388.07" x2="388.07" y1="743.60" y2="820.10" stroke="rgba(0,0,0,0.1)" stroke-width="1"/>
<line x1="410.00" x2="410.00" y1="743.60" y2="820.10" stroke="rgba(0,0,0,0.1)" stroke-width="1"/>
<line x1="431.93" x2="431.93" y1="743.60" y2="820.10" stroke="rgba(0,0,0,0.1)" stroke-width="1"/>
<line x1="453.87" x2="453.87" y1="743.60" y2="820.10" stroke="rgba(0,0,0,0.1)" stroke-width="1"/>
<line x1="475.80" x2="475.80" y1="743.60" y2="820.10" stroke="rgba(0,0,0,0.1)" stroke-width="1"/>
<line x1="497.73" x2="497.73" y1="743.60" y2="820.10" stroke="rgba(0,0,0,0.1)" stroke-width="1"/>
<line x1="519.67" x2="519.67" y1="743.60" y2="820.10" stroke="rgba(0,0,0,0.1)" stroke-width="1"/>
<line x1="541.60" x2="541.60" y1="743.60" y2="820.10" stroke="rgba(0,0,0,0.1)" stroke-width="1"/>
<line x1="563.53" x2="563.53" y1="743.60" y2="820.10" stroke="rgba(0,0,0,0.1)" stroke-width="1"/>
<line x1="585.47" x2="585.47" y1="743.60" y2="820.10" stroke="rgba(0,0,0,0.1)" stroke-width="1"/>
<line x1="607.40" x2="607.40" y1="743.60" y2="820.10" stroke="rgba(0,0,0,0.1)" stroke-width="1"/>
<line x1="629.33" x2="629.33" y1="743.60" y2="820.10" stroke="rgba(0,0,0,0.1)" stroke-width="1"/>
<line x1="651.27" x2="651.27" y1="743.60" y2="820.10" stroke="rgba(0,0,0,0.1)" stroke-width="1"/>
<line x1="673.20" x2="673.20" y1="743.60" y2="820.10" stroke="rgba(0,0,0,0.1)" stroke-width="1"/>
<line x1="695.13" x2="695.13" y1="743.60" y2="820.10" stroke="rgba(0,0,0,0.1)" stroke-width="1"/>
<line x1="717.07" x2="717.07" y1="743.60" y2="820.10" stroke="rgba(0,0,0,0.1)" stroke-width="1"/>
<line x1="739.00" x2="739.00" y1="743.60" y2="820.10" stroke="rgba(0,0,0,0.1)" stroke-width="1"/>
<line x1="760.93" x2="760.93" y1="743.60" y2="820.10" stroke="rgba(0,0,0,0.1)" stroke-width="1"/>
<line x1="782.87" x2="782.87" y1="743.60" y2="820.10" stroke="rgba(0,0,0,0.1)" stroke-width="1"/>
<line x1="804.80" x2="804.80" y1="743.60" y2="820.10" stroke="rgba(0,0,0,0.1)" stroke-width="1"/>
<line x1="826.73" x2="826.73" y1="743.60" y2="820.10" stroke="rgba(0,0,0,0.1)" stroke-width="1"/>
<line x1="848.67" x2="848.67" y1="743.60" y2="820.10" stroke="rgba(0,0,0,0.1)" stroke-width="1"/>
<line x1="870.60" x2="870.60" y1="743.60" y2="820.10" stroke="rgba(0,0,0,0.1)" stroke-width="1"/>
<line x1="892.53" x2="892.53" y1="743.60" y2="820.10" stroke="rgba(0,0,0,0.1)" stroke-width="1"/>
<line x1="914.47" x2="914.47" y1="743.60" y2="820.10" stroke="rgba(0,0,0,0.1)" stroke-width="1"/>
<line x1="936.40" x2="936.40" y1="743.60" y2="820.10" stroke="rgba(0,0,0,0.1)" stroke-width="1"/>
<line x1="958.33" x2="958.33" y1="743.60" y2="820.10" stroke="rgba(0,0,0,0.1)" stroke-width="1"/>
<line x1="980.27" x2="980.27" y1="743.60" y2="820.10" stroke="rgba(0,0,0,0.1)" stroke-width="1"/>
<line x1="1002.20" x2="1002.20" y1="743.60" y2="820.10" stroke="rgba(0,0,0,0.1)" stroke-width="1"/>
<line x1="1024.13" x2="1024.13" y1="743.60" y2="820.10" stroke="rgba(0,0,0,0.1)" stroke-width="1"/>
<line x1="1046.07" x2="1046.07" y1="743.60" y2="820.10" stroke="rgba(0,0,0,0.1)" stroke-width="1"/>
<line x1="1068.00" x2="1068.00" y1="743.60" y2="820.10" stroke="rgba(0,0,0,0.1)" stroke-width="1"/>
<line x1="1089.93" x2="1089.93" y1="743.60" y2="820.10" stroke="rgba(0,0,0,0.1)" stroke-width="1"/>
<line x1="1111.87" x2="1111.87" y1="743.60" y2="820.10" stroke="rgba(0,0,0,0.1)" stroke-width="1"/>
<line x1="1133.80" x2="1133.80" y1="743.60" y2="820.10" stroke="rgba(0,0,0,0.1)" stroke-width="1"/>
<line x1="1155.73" x2="1155.73" y1="743.60" y2="820.10" stroke="rgba(0,0,0,0.1)" stroke-width="1"/>
<line x1="1177.67" x2="1177.67" y1="743.60" y2="820.10" stroke="rgba(0,0,0,0.1)" stroke-width="1"/>
<line x1="1199.60" x2="1199.60" y1="743.60" y2="820.10" stroke="rgba(0,0,0,0.1)" stroke-width="1"/>
<line x1="1221.53" x2="1221.53" y1="743.60" y2="820.10" stroke="rgba(0,0,0,0.1)" stroke-width="1"/>
<line x1="1243.47" x2="1243.47" y1="743.60" y2="820.10" stroke="rgba(0,0,0,0.1)" stroke-width="1"/>
<line x1="1265.40" x2="1265.40" y1="743.60" y2="820.10" stroke="rgba(0,0,0,0.1)" stroke-width="1"/>
<line x1="1287.33" x2="1287.33" y1="743.60" y2="820.10" stroke="rgba(0,0,0,0.1)" stroke-width="1"/>
<line x1="1309.27" x2="1309.27" y1="743.60" y2="820.10" stroke="rgba(0,0,0,0.1)" stroke-width="1"/>
<line x1="1331.20" x2="1331.20" y1="743.60" y2="820.10" stroke="rgba(0,0,0,0.1)" stroke-width="1"/>
<line x1="1353.13" x2="1353.13" y1="743.60" y2="820.10" stroke="rgba(0,0,0,0.1)" stroke-width="1"/>
<line x1="1375.07" x2="1375.07" y1="743.60" y2="820.10" stroke="rgba(0,0,0,0.1)" stroke-width="1"/>
<line x1="1397.00" x2="1397.00" y1="743.60" y2="820.10" stroke="rgba(0,0,0,0.1)" stroke-width="1"/>
<line x1="1418.93" x2="1418.93" y1="743.60" y2="820.10" stroke="rgba(0,0,0,0.1)" stroke-width="1"/>
<line x1="1440.87" x2="1440.87" y1="743.60" y2="820.10" stroke="rgba(0,0,0,0.1)" stroke-width="1"/>
<line x1="1462.80" x2="1462.80" y1="743.60" y2="820.10" stroke="rgba(0,0,0,0.1)" stroke-width="1"/>
<line x1="1484.73" x2="1484.73" y1="743.60" y2="820.10" stroke="rgba(0,0,0,0.1)" stroke-width="1"/>
<line x1="1506.67" x2="1506.67" y1="743.60" y2="820.10" stroke="rgba(0,0,0,0.1)" stroke-width="1"/>
<line x1="1528.60" x2="1528.60" y1="743.60" y2="820.10" stroke="rgba(0,0,0,0.1)" stroke-width="1"/>
<line x1="1550.53" x2="1550.53" y1="743.60" y2="820.10" stroke="rgba(0,0,0,0.1)" stroke-width="1"/>
<line x1="1572.47" x2="1572.47" y1="743.60" y2="820.10" stroke="rgba(0,0,0,0.1)" stroke-width="1"/>
<line x1="1594.40" x2="1594.40" y1="743.60" y2="820.10" stroke="rgba(0,0,0,0.1)" stroke-width="1"/>
<line x1="1616.33" x2="1616.33" y1="743.60" y2="820.10" stroke="rgba(0,0,0,0.1)" stroke-width="1"/>
<line x1="1638.27" x2="1638.27" y1="743.60" y2="820.10" stroke="rgba(0,0,0,0.1)" stroke-width="1"/>
<line x1="1660.20" x2="1660.20" y1="743.60" y2="820.10" stroke="rgba(0,0,0,0.1)" stroke-width="1"/>
<line x1="1682.13" x2="1682.13" y1="743.60" y2="820.10" stroke="rgba(0,0,0,0.1)" stroke-width="1"/>
<line x1="1704.07" x2="1704.07" y1="743.60" y2="820.10" stroke="rgba(0,0,0,0.1)" stroke-width="1"/>
<line x1="1726.00" x2="1726.00" y1="743.60" y2="820.10" stroke="rgba(0,0,0,0.1)" stroke-width="1"/>
<line x1="1747.93" x2="1747.93" y1="743.60" y2="820.10" stroke="rgba(0,0,0,0.1)" stroke-width="1"/>
<line x1="1769.87" x2="1769.87" y1="743.60" y2="820.10" stroke="rgba(0,0,0,0.1)" stroke-width="1"/>
<line x1="1791.80" x2="1791.80" y1="743.60" y2="820.10" stroke="rgba(0,0,0,0.1)" stroke-width="1"/>
<line x1="1813.73" x2="1813.73" y1="743.60" y2="820.10" stroke="rgba(0,0,0,0.1)" stroke-width="1"/>
<line x1="1835.67" x2="1835.67" y1="743.60" y2="820.10" stroke="rgba(0,0,0,0.1)" stroke-width="1"/>
<line x1="1857.60" x2="1857.60" y1="743.60" y2="820.10" stroke="rgba(0,0,0,0.1)" stroke-width="1"/>
<line x1="334.20" x2="1857.60" y1="743.60" y2="743.60" stroke="rgba(0,0,0,0.1)" stroke-width="1"/>
<line x1="334.20" x2="1857.60" y1="765.77" y2="765.77" stroke="rgba(0,0,0,0.1)" stroke-width="1"/>
<line x1="334.20" x2="1857.60" y1="787.93" y2="787.93" stroke="rgba(0,0,0,0.1)" stroke-width="1"/>
<line x1="334.20" x2="1857.60" y1="810.10" y2="810.10" stroke="rgba(0,0,0,0.25)" stroke-width="1"/>
<line x1="344.20" x2="344.20" y1="743.60" y2="810.10" stroke="rgba(0,0,0,0.1)" stroke-width="1"/>
<line x1="344.20" x2="1857.60" y1="810.10" y2="810.10" stroke="rgba(0,0,0,0.1)" stroke-width="1"/>
<g clip-path="url(#clipc2)">
<path d="M344.20,762.50C352.97,762.50 357.36,762.50 366.13,762.50C374.91,762.50 379.29,762.50 388.07,762.50C396.84,762.50 401.23,762.50 410.00,762.50C418.77,762.50 423.16,762.50 431.93,762.50C440.71,762.50 445.09,762.50 453.87,762.50C462.64,762.50 467.03,762.50 475.80,762.50C484.57,762.50 488.96,762.50 497.73,762.50C506.51,762.50 510.89,762.50 519.67,762.50C528.44,762.50 532.83,762.50 541.60,762.50C550.37,762.50 554.76,762.50 563.53,762.50C572.31,762.50 576.69,762.50 585.47,762.50C594.24,762.50 598.63,762.50 607.40,762.50C616.17,762.50 620.56,762.50 629.33,762.50C638.11,762.50 642.49,762.50 651.27,762.50C660.04,762.50 664.43,762.50 673.20,762.50C681.97,762.50 686.36,762.50 695.13,762.50C703.91,762.50 708.29,762.50 717.07,762.50C725.84,762.50 730.23,762.50 739.00,762.50C747.77,762.50 752.16,762.50 760.93,762.50C769.71,762.50 774.09,762.50 782.87,762.50C791.64,762.50 796.03,762.50 804.80,762.50C813.57,762.50 817.96,762.50 826.73,762.50C835.51,762.50 839.89,762.50 848.67,762.50C857.44,762.50 861.83,762.50 870.60,762.50C879.37,762.50 883.76,762.50 892.53,762.50C901.31,762.50 905.69,762.50 914.47,762.50C923.24,762.50 927.63,762.50 936.40,762.50C945.17,762.50 949.56,762.50 958.33,762.50C967.11,762.50 971.49,762.50 980.27,762.50C989.04,762.50 993.43,762.50 1002.20,762.50C1010.97,762.50 1015.36,762.50 1024.13,762.50C1032.91,762.50 1037.29,762.50 1046.07,762.50C1054.84,762.50 1059.23,762.50 1068.00,762.50C1076.77,762.50 1081.16,762.50 1089.93,762.50C1098.71,762.50 1103.09,762.50 1111.87,762.50C1120.64,762.50 1125.03,762.50 1133.80,762.50C1142.57,762.50 1146.96,762.50 1155.73,762.50C1164.51,762.50 1168.89,762.50 1177.67,762.50C1186.44,762.50 1190.83,762.50 1199.60,762.50C1208.37,762.50 1212.76,762.50 1221.53,762.50C1230.31,762.50 1234.69,762.50 1243.47,762.50C1252.24,762.50 1256.63,762.50 1265.40,762.50C1274.17,762.50 1278.56,762.50 1287.33,762.50C1296.11,762.50 1300.49,762.50 1309.27,762.50C1318.04,762.50 1322.43,762.50 1331.20,762.50C1339.97,762.50 1344.36,762.50 1353.13,762.50C1361.91,762.50 1366.29,762.50 1375.07,762.50C1383.84,762.50 1388.23,762.50 1397.00,762.50C1405.77,762.50 1410.16,762.50 1418.93,762.50C1427.71,762.50 1432.09,762.50 1440.87,762.50C1449.64,762.50 1454.03,762.50 1462.80,762.50C1471.57,762.50 1475.96,762.50 1484.73,762.50C1493.51,762.50 1497.89,762.50 1506.67,762.50C1515.44,762.50 1519.83,762.50 1528.60,762.50C1537.37,762.50 1541.76,762.50 1550.53,762.50C1559.31,762.50 1563.69,762.50 1572.47,762.50C1581.24,762.50 1585.63,762.50 1594.40,762.50C1603.17,762.50 1607.56,762.50 1616.33,762.50C1625.11,762.50 1629.49,762.50 1638.27,762.50C1647.04,762.50 1651.43,762.50 1660.20,762.50C1668.97,762.50 1673.36,762.50 1682.13,762.50C1690.91,762.50 1695.29,762.50 1704.07,762.50C1712.84,762.50 1717.23,762.50 1726.00,762.50C1734.77,762.50 1739.16,762.50 1747.93,762.50C1756.71,762.50 1761.09,762.50 1769.87,762.50C1778.64,762.50 1783.03,762.50 1791.80,762.50C1800.57,762.50 1804.96,762.50 1813.73,762.50C1822.51,762.50 1826.89,762.50 1835.67,762.50C1844.44,762.50 1848.83,762.50 1857.60,762.50L1857.60,810.10L344.20,810.10Z" fill="rgba(203,203,203,0.5)"/>
<path d="M344.20,762.50C352.97,762.50 357.36,762.50 366.13,762.50C374.91,762.50 379.29,762.50 388.07,762.50C396.84,762.50 401.23,762.50 410.00,762.50C418.77,762.50 423.16,762.50 431.93,762.50C440.71,762.50 445.09,762.50 453.87,762.50C462.64,762.50 467.03,762.50 475.80,762.50C484.57,762.50 488.96,762.50 497.73,762.50C506.51,762.50 510.89,762.50 519.67,762.50C528.44,762.50 532.83,762.50 541.60,762.50C550.37,762.50 554.76,762.50 563.53,762.50C572.31,762.50 576.69,762.50 585.47,762.50C594.24,762.50 598.63,762.50 607.40,762.50C616.17,762.50 620.56,762.50 629.33,762.50C638.11,762.50 642.49,762.50 651.27,762.50C660.04,762.50 664.43,762.50 673.20,762.50C681.97,762.50 686.36,762.50 695.13,762.50C703.91,762.50 708.29,762.50 717.07,762.50C725.84,762.50 730.23,762.50 739.00,762.50C747.77,762.50 752.16,762.50 760.93,762.50C769.71,762.50 774.09,762.50 782.87,762.50C791.64,762.50 796.03,762.50 804.80,762.50C813.57,762.50 817.96,762.50 826.73,762.50C835.51,762.50 839.89,762.50 848.67,762.50C857.44,762.50 861.83,762.50 870.60,762.50C879.37,762.50 883.76,762.50 892.53,762.50C901.31,762.50 905.69,762.50 914.47,762.50C923.24,762.50 927.63,762.50 936.40,762.50C945.17,762.50 949.56,762.50 958.33,762.50C967.11,762.50 971.49,762.50 980.27,762.50C989.04,762.50 993.43,762.50 1002.20,762.50C1010.97,762.50 1015.36,762.50 1024.13,762.50C1032.91,762.50 1037.29,762.50 1046.07,762.50C1054.84,762.50 1059.23,762.50 1068.00,762.50C1076.77,762.50 1081.16,762.50 1089.93,762.50C1098.71,762.50 1103.09,762.50 1111.87,762.50C1120.64,762.50 1125.03,762.50 1133.80,762.50C1142.57,762.50 1146.96,762.50 1155.73,762.50C1164.51,762.50 1168.89,762.50 1177.67,762.50C1186.44,762.50 1190.83,762.50 1199.60,762.50C1208.37,762.50 1212.76,762.50 1221.53,762.50C1230.31,762.50 1234.69,762.50 1243.47,762.50C1252.24,762.50 1256.63,762.50 1265.40,762.50C1274.17,762.50 1278.56,762.50 1287.33,762.50C1296.11,762.50 1300.49,762.50 1309.27,762.50C1318.04,762.50 1322.43,762.50 1331.20,762.50C1339.97,762.50 1344.36,762.50 1353.13,762.50C1361.91,762.50 1366.29,762.50 1375.07,762.50C1383.84,762.50 1388.23,762.50 1397.00,762.50C1405.77,762.50 1410.16,762.50 1418.93,762.50C1427.71,762.50 1432.09,762.50 1440.87,762.50C1449.64,762.50 1454.03,762.50 1462.80,762.50C1471.57,762.50 1475.96,762.50 1484.73,762.50C1493.51,762.50 1497.89,762.50 1506.67,762.50C1515.44,762.50 1519.83,762.50 1528.60,762.50C1537.37,762.50 1541.76,762.50 1550.53,762.50C1559.31,762.50 1563.69,762.50 1572.47,762.50C1581.24,762.50 1585.63,762.50 1594.40,762.50C1603.17,762.50 1607.56,762.50 1616.33,762.50C1625.11,762.50 1629.49,762.50 1638.27,762.50C1647.04,762.50 1651.43,762.50 1660.20,762.50C1668.97,762.50 1673.36,762.50 1682.13,762.50C1690.91,762.50 1695.29,762.50 1704.07,762.50C1712.84,762.50 1717.23,762.50 1726.00,762.50C1734.77,762.50 1739.16,762.50 1747.93,762.50C1756.71,762.50 1761.09,762.50 1769.87,762.50C1778.64,762.50 1783.03,762.50 1791.80,762.50C1800.57,762.50 1804.96,762.50 1813.73,762.50C1822.51,762.50 1826.89,762.50 1835.67,762.50C1844.44,762.50 1848.83,762.50 1857.60,762.50" fill="none" stroke="rgba(0,0,0,0.1)" stroke-width="3" stroke-linejoin="miter"/>
<path d="M344.20,803.01C352.97,803.01 357.36,803.01 366.13,803.01C374.91,803.01 379.29,803.01 388.07,803.01C396.84,803.01 401.23,803.01 410.00,803.01C418.77,803.01 423.16,803.01 431.93,803.01C440.71,803.01 445.09,803.01 453.87,803.01C462.64,803.01 467.03,803.01 475.80,803.01C484.57,803.01 488.96,803.01 497.73,803.01C506.51,803.01 510.89,803.01 519.67,803.01C528.44,803.01 532.83,803.01 541.60,803.01C550.37,803.01 554.76,803.01 563.53,803.01C572.31,803.01 576.69,803.01 585.47,803.01C594.24,803.01 598.63,803.01 607.40,803.01C616.17,803.01 620.56,803.01 629.33,803.01C638.11,803.01 642.49,803.01 651.27,803.01C660.04,803.01 664.43,803.01 673.20,803.01C681.97,803.01 686.36,803.01 695.13,803.01C703.91,803.01 708.29,803.01 717.07,803.01C725.84,803.01 730.23,803.01 739.00,803.01C747.77,803.01 752.16,803.01 760.93,803.01C769.71,803.01 774.09,803.01 782.87,803.01C791.64,803.01 796.03,803.01 804.80,803.01C813.57,803.01 817.96,803.01 826.73,803.01C835.51,803.01 839.89,803.01 848.67,803.01C857.44,803.01 861.83,803.01 870.60,803.01C879.37,803.01 883.76,803.01 892.53,803.01C901.31,803.01 905.69,803.01 914.47,803.01C923.24,803.01 927.63,803.01 936.40,803.01C945.17,803.01 949.56,803.01 958.33,803.01C967.11,803.01 971.49,803.01 980.27,803.01C989.04,803.01 993.43,803.01 1002.20,803.01C1010.97,803.01 1015.36,803.01 1024.13,803.01C1032.91,803.01 1037.29,803.01 1046.07,803.01C1054.84,803.01 1059.23,803.01 1068.00,803.01C1076.77,803.01 1081.16,803.01 1089.93,803.01C1098.71,803.01 1103.09,803.01 1111.87,803.01C1120.64,803.01 1125.03,803.01 1133.80,803.01C1142.57,803.01 1146.96,803.01 1155.73,803.01C1164.51,803.01 1168.89,803.01 1177.67,803.01C1186.44,803.01 1190.83,803.01 1199.60,803.01C1208.37,803.01 1212.76,803.01 1221.53,803.01C1230.31,803.01 1234.69,803.01 1243.47,803.01C1252.24,803.01 1256.63,803.01 1265.40,803.01C1274.17,803.01 1278.56,803.01 1287.33,803.01C1296.11,803.01 1300.49,803.01 1309.27,803.01C1318.04,803.01 1322.43,803.01 1331.20,803.01C1339.97,803.01 1344.36,803.01 1353.13,803.01C1361.91,803.01 1366.29,803.01 1375.07,803.01C1383.84,803.01 1388.23,803.01 1397.00,803.01C1405.77,803.01 1410.16,803.01 1418.93,803.01C1427.71,803.01 1432.09,803.01 1440.87,803.01C1449.64,803.01 1454.03,803.01 1462.80,803.01C1471.57,803.01 1475.96,803.01 1484.73,803.01C1493.51,803.01 1497.89,803.01 1506.67,803.01C1515.44,803.01 1519.83,803.01 1528.60,803.01C1537.37,803.01 1541.76,803.01 1550.53,803.01C1559.31,803.01 1563.69,803.01 1572.47,803.01C1581.24,803.01 1585.63,803.01 1594.40,803.01C1603.17,803.01 1607.56,803.01 1616.33,803.01C1625.11,803.01 1629.49,803.01 1638.27,803.01C1647.04,803.01 1651.43,803.01 1660.20,803.01C1668.97,803.01 1673.36,803.01 1682.13,803.01C1690.91,803.01 1695.29,803.01 1704.07,803.01C1712.84,803.01 1717.23,803.01 1726.00,803.01C1734.77,803.01 1739.16,803.01 1747.93,803.01C1756.71,803.01 1761.09,803.01 1769.87,803.01C1778.64,803.01 1783.03,803.01 1791.80,803.01C1800.57,803.01 1804.96,803.01 1813.73,803.01C1822.51,803.01 1826.89,803.01 1835.67,803.01C1844.44,803.01 1848.83,803.01 1857.60,803.01L1857.60,810.10L344.20,810.10Z" fill="rgba(252,188,34,0.5)"/>
<path d="M344.20,803.01C352.97,803.01 357.36,803.01 366.13,803.01C374.91,803.01 379.29,803.01 388.07,803.01C396.84,803.01 401.23,803.01 410.00,803.01C418.77,803.01 423.16,803.01 431.93,803.01C440.71,803.01 445.09,803.01 453.87,803.01C462.64,803.01 467.03,803.01 475.80,803.01C484.57,803.01 488.96,803.01 497.73,803.01C506.51,803.01 510.89,803.01 519.67,803.01C528.44,803.01 532.83,803.01 541.60,803.01C550.37,803.01 554.76,803.01 563.53,803.01C572.31,803.01 576.69,803.01 585.47,803.01C594.24,803.01 598.63,803.01 607.40,803.01C616.17,803.01 620.56,803.01 629.33,803.01C638.11,803.01 642.49,803.01 651.27,803.01C660.04,803.01 664.43,803.01 673.20,803.01C681.97,803.01 686.36,803.01 695.13,803.01C703.91,803.01 708.29,803.01 717.07,803.01C725.84,803.01 730.23,803.01 739.00,803.01C747.77,803.01 752.16,803.01 760.93,803.01C769.71,803.01 774.09,803.01 782.87,803.01C791.64,803.01 796.03,803.01 804.80,803.01C813.57,803.01 817.96,803.01 826.73,803.01C835.51,803.01 839.89,803.01 848.67,803.01C857.44,803.01 861.83,803.01 870.60,803.01C879.37,803.01 883.76,803.01 892.53,803.01C901.31,803.01 905.69,803.01 914.47,803.01C923.24,803.01 927.63,803.01 936.40,803.01C945.17,803.01 949.56,803.01 958.33,803.01C967.11,803.01 971.49,803.01 980.27,803.01C989.04,803.01 993.43,803.01 1002.20,803.01C1010.97,803.01 1015.36,803.01 1024.13,803.01C1032.91,803.01 1037.29,803.01 1046.07,803.01C1054.84,803.01 1059.23,803.01 1068.00,803.01C1076.77,803.01 1081.16,803.01 1089.93,803.01C1098.71,803.01 1103.09,803.01 1111.87,803.01C1120.64,803.01 1125.03,803.01 1133.80,803.01C1142.57,803.01 1146.96,803.01 1155.73,803.01C1164.51,803.01 1168.89,803.01 1177.67,803.01C1186.44,803.01 1190.83,803.01 1199.60,803.01C1208.37,803.01 1212.76,803.01 1221.53,803.01C1230.31,803.01 1234.69,803.01 1243.47,803.01C1252.24,803.01 1256.63,803.01 1265.40,803.01C1274.17,803.01 1278.56,803.01 1287.33,803.01C1296.11,803.01 1300.49,803.01 1309.27,803.01C1318.04,803.01 1322.43,803.01 1331.20,803.01C1339.97,803.01 1344.36,803.01 1353.13,803.01C1361.91,803.01 1366.29,803.01 1375.07,803.01C1383.84,803.01 1388.23,803.01 1397.00,803.01C1405.77,803.01 1410.16,803.01 1418.93,803.01C1427.71,803.01 1432.09,803.01 1440.87,803.01C1449.64,803.01 1454.03,803.01 1462.80,803.01C1471.57,803.01 1475.96,803.01 1484.73,803.01C1493.51,803.01 1497.89,803.01 1506.67,803.01C1515.44,803.01 1519.83,803.01 1528.60,803.01C1537.37,803.01 1541.76,803.01 1550.53,803.01C1559.31,803.01 1563.69,803.01 1572.47,803.01C1581.24,803.01 1585.63,803.01 1594.40,803.01C1603.17,803.01 1607.56,803.01 1616.33,803.01C1625.11,803.01 1629.49,803.01 1638.27,803.01C1647.04,803.01 1651.43,803.01 1660.20,803.01C1668.97,803.01 1673.36,803.01 1682.13,803.01C1690.91,803.01 1695.29,803.01 1704.07,803.01C1712.84,803.01 1717.23,803.01 1726.00,803.01C1734.77,803.01 1739.16,803.01 1747.93,803.01C1756.71,803.01 1761.09,803.01 1769.87,803.01C1778.64,803.01 1783.03,803.01 1791.80,803.01C1800.57,803.01 1804.96,803.01 1813.73,803.01C1822.51,803.01 1826.89,803.01 1835.67,803.01C1844.44,803.01 1848.83,803.01 1857.60,803.01" fill="none" stroke="rgba(0,0,0,0.1)" stroke-width="3" stroke-linejoin="miter"/>
</g>
<text x="333.70" y="746.05" text-anchor="end">1.5</text>
<text x="333.70" y="768.22" text-anchor="end">1.0</text>
<text x="333.70" y="790.38" text-anchor="end">0.5</text>
<text x="333.70" y="812.55" text-anchor="end">0</text>
<text transform="translate(343.70,819.20) rotate(-50)" text-anchor="end" y="4.2">19:22</text>
<text transform="translate(365.63,819.20) rotate(-50)" text-anchor="end" y="4.2">19:23</text>
<text transform="translate(387.57,819.20) rotate(-50)" text-anchor="end" y="4.2">19:24</text>
<text transform="translate(409.50,819.20) rotate(-50)" text-anchor="end" y="4.2">19:25</text>
<text transform="translate(431.43,819.20) rotate(-50)" text-anchor="end" y="4.2">19:26</text>
<text transform="translate(453.37,819.20) rotate(-50)" text-anchor="end" y="4.2">19:27</text>
<text transform="translate(475.30,819.20) rotate(-50)" text-anchor="end" y="4.2">19:28</text>
<text transform="translate(497.23,819.20) rotate(-50)" text-anchor="end" y="4.2">19:29</text>
<text transform="translate(519.17,819.20) rotate(-50)" text-anchor="end" y="4.2">19:30</text>
<text transform="translate(541.10,819.20) rotate(-50)" text-anchor="end" y="4.2">19:31</text>
<text transform="translate(563.03,819.20) rotate(-50)" text-anchor="end" y="4.2">19:32</text>
<text transform="translate(584.97,819.20) rotate(-50)" text-anchor="end" y="4.2">19:33</text>
<text transform="translate(606.90,819.20) rotate(-50)" text-anchor="end" y="4.2">19:34</text>
<text transform="translate(628.83,819.20) rotate(-50)" text-anchor="end" y="4.2">19:35</text>
<text transform="translate(650.77,819.20) rotate(-50)" text-anchor="end" y="4.2">19:36</text>
<text transform="translate(672.70,819.20) rotate(-50)" text-anchor="end" y="4.2">19:37</text>
<text transform="translate(694.63,819.20) rotate(-50)" text-anchor="end" y="4.2">19:38</text>
<text transform="translate(716.57,819.20) rotate(-50)" text-anchor="end" y="4.2">19:39</text>
<text transform="translate(738.50,819.20) rotate(-50)" text-anchor="end" y="4.2">19:40</text>
<text transform="translate(760.43,819.20) rotate(-50)" text-anchor="end" y="4.2">19:41</text>
<text transform="translate(782.37,819.20) rotate(-50)" text-anchor="end" y="4.2">19:42</text>
<text transform="translate(804.30,819.20) rotate(-50)" text-anchor="end" y="4.2">19:43</text>
<text transform="translate(826.23,819.20) rotate(-50)" text-anchor="end" y="4.2">19:44</text>
<text transform="translate(848.17,819.20) rotate(-50)" text-anchor="end" y="4.2">19:45</text>
<text transform="translate(870.10,819.20) rotate(-50)" text-anchor="end" y="4.2">19:46</text>
<text transform="translate(892.03,819.20) rotate(-50)" text-anchor="end" y="4.2">19:47</text>
<text transform="translate(913.97,819.20) rotate(-50)" text-anchor="end" y="4.2">19:48</text>
<text transform="translate(935.90,819.20) rotate(-50)" text-anchor="end" y="4.2">19:49</text>
<text transform="translate(957.83,819.20) rotate(-50)" text-anchor="end" y="4.2">19:50</text>
<text transform="translate(979.77,819.20) rotate(-50)" text-anchor="end" y="4.2">19:51</text>
<text transform="translate(1001.70,819.20) rotate(-50)" text-anchor="end" y="4.2">19:52</text>
<text transform="translate(1023.63,819.20) rotate(-50)" text-anchor="end" y="4.2">19:53</text>
<text transform="translate(1045.57,819.20) rotate(-50)" text-anchor="end" y="4.2">19:54</text>
<text transform="translate(1067.50,819.20) rotate(-50)" text-anchor="end" y="4.2">19:55</text>
<text transform="translate(1089.43,819.20) rotate(-50)" text-anchor="end" y="4.2">19:56</text>
<text transform="translate(1111.37,819.20) rotate(-50)" text-anchor="end" y="4.2">19:57</text>
<text transform="translate(1133.30,819.20) rotate(-50)" text-anchor="end" y="4.2">19:58</text>
<text transform="translate(1155.23,819.20) rotate(-50)" text-anchor="end" y="4.2">19:59</text>
<text transform="translate(1177.17,819.20) rotate(-50)" text-anchor="end" y="4.2">20:00</text>
<text transform="translate(1199.10,819.20) rotate(-50)" text-anchor="end" y="4.2">20:01</text>
<text transform="translate(1221.03,819.20) rotate(-50)" text-anchor="end" y="4.2">20:02</text>
<text transform="translate(1242.97,819.20) rotate(-50)" text-anchor="end" y="4.2">20:03</text>
<text transform="translate(1264.90,819.20) rotate(-50)" text-anchor="end" y="4.2">20:04</text>
<text transform="translate(1286.83,819.20) rotate(-50)" text-anchor="end" y="4.2">20:05</text>
<text transform="translate(1308.77,819.20) rotate(-50)" text-anchor="end" y="4.2">20:06</text>
<text transform="translate(1330.70,819.20) rotate(-50)" text-anchor="end" y="4.2">20:07</text>
<text transform="translate(1352.63,819.20) rotate(-50)" text-anchor="end" y="4.2">20:08</text>
<text transform="translate(1374.57,819.20) rotate(-50)" text-anchor="end" y="4.2">20:09</text>
<text transform="translate(1396.50,819.20) rotate(-50)" text-anchor="end" y="4.2">20:10</text>
<text transform="translate(1418.43,819.20) rotate(-50)" text-anchor="end" y="4.2">20:11</text>
<text transform="translate(1440.37,819.20) rotate(-50)" text-anchor="end" y="4.2">20:12</text>
<text transform="translate(1462.30,819.20) rotate(-50)" text-anchor="end" y="4.2">20:13</text>
<text transform="translate(1484.23,819.20) rotate(-50)" text-anchor="end" y="4.2">20:14</text>
<text transform="translate(1506.17,819.20) rotate(-50)" text-anchor="end" y="4.2">20:15</text>
<text transform="translate(1528.10,819.20) rotate(-50)" text-anchor="end" y="4.2">20:16</text>
<text transform="translate(1550.03,819.20) rotate(-50)" text-anchor="end" y="4.2">20:17</text>
<text transform="translate(1571.97,819.20) rotate(-50)" text-anchor="end" y="4.2">20:18</text>
<text transform="translate(1593.90,819.20) rotate(-50)" text-anchor="end" y="4.2">20:19</text>
<text transform="translate(1615.83,819.20) rotate(-50)" text-anchor="end" y="4.2">20:20</text>
<text transform="translate(1637.77,819.20) rotate(-50)" text-anchor="end" y="4.2">20:21</text>
<text transform="translate(1659.70,819.20) rotate(-50)" text-anchor="end" y="4.2">20:22</text>
<text transform="translate(1681.63,819.20) rotate(-50)" text-anchor="end" y="4.2">20:23</text>
<text transform="translate(1703.57,819.20) rotate(-50)" text-anchor="end" y="4.2">20:24</text>
<text transform="translate(1725.50,819.20) rotate(-50)" text-anchor="end" y="4.2">20:25</text>
<text transform="translate(1747.43,819.20) rotate(-50)" text-anchor="end" y="4.2">20:26</text>
<text transform="translate(1769.37,819.20) rotate(-50)" text-anchor="end" y="4.2">20:27</text>
<text transform="translate(1791.30,819.20) rotate(-50)" text-anchor="end" y="4.2">20:28</text>
<text transform="translate(1813.23,819.20) rotate(-50)" text-anchor="end" y="4.2">20:29</text>
<text transform="translate(1835.17,819.20) rotate(-50)" text-anchor="end" y="4.2">20:30</text>
<text transform="translate(1857.10,819.20) rotate(-50)" text-anchor="end" y="4.2">20:31</text>
<rect x="976.5" y="720.8" width="40" height="12" fill="rgba(252,188,34,0.5)" stroke="rgba(0,0,0,0.1)" stroke-width="3"/>
<text x="1022.5" y="729.8">RAM Used</text>
<rect x="1090.5" y="720.8" width="40" height="12" fill="rgba(203,203,203,0.5)" stroke="rgba(0,0,0,0.1)" stroke-width="3"/>
<text x="1136.5" y="729.8">RAM total</text>
</g>
<g id="c3">
<clipPath id="clipc3"><rect x="348.4" y="977.1" width="1509.1999999999998" height="69.49999999999989"/></clipPath>
<line x1="348.40" x2="348.40" y1="978.60" y2="1055.10" stroke="rgba(0,0,0,0.17)" stroke-width="1"/>
<line x1="370.27" x2="370.27" y1="978.60" y2="1055.10" stroke="rgba(0,0,0,0.1)" stroke-width="1"/>
<line x1="392.14" x2="392.14" y1="978.60" y2="1055.10" stroke="rgba(0,0,0,0.1)" stroke-width="1"/>
<line x1="414.02" x2="414.02" y1="978.60" y2="1055.10" stroke="rgba(0,0,0,0.1)" stroke-width="1"/>
<line x1="435.89" x2="435.89" y1="978.60" y2="1055.10" stroke="rgba(0,0,0,0.1)" stroke-width="1"/>
<line x1="457.76" x2="457.76" y1="978.60" y2="1055.10" stroke="rgba(0,0,0,0.1)" stroke-width="1"/>
<line x1="479.63" x2="479.63" y1="978.60" y2="1055.10" stroke="rgba(0,0,0,0.1)" stroke-width="1"/>
<line x1="501.51" x2="501.51" y1="978.60" y2="1055.10" stroke="rgba(0,0,0,0.1)" stroke-width="1"/>
<line x1="523.38" x2="523.38" y1="978.60" y2="1055.10" stroke="rgba(0,0,0,0.1)" stroke-width="1"/>
<line x1="545.25" x2="545.25" y1="978.60" y2="1055.10" stroke="rgba(0,0,0,0.1)" stroke-width="1"/>
<line x1="567.12" x2="567.12" y1="978.60" y2="1055.10" stroke="rgba(0,0,0,0.1)" stroke-width="1"/>
<line x1="589.00" x2="589.00" y1="978.60" y2="1055.10" stroke="rgba(0,0,0,0.1)" stroke-width="1"/>
<line x1="610.87" x2="610.87" y1="978.60" y2="1055.10" stroke="rgba(0,0,0,0.1)" stroke-width="1"/>
<line x1="632.74" x2="632.74" y1="978.60" y2="1055.10" stroke="rgba(0,0,0,0.1)" stroke-width="1"/>
<line x1="654.61" x2="654.61" y1="978.60" y2="1055.10" stroke="rgba(0,0,0,0.1)" stroke-width="1"/>
<line x1="676.49" x2="676.49" y1="978.60" y2="1055.10" stroke="rgba(0,0,0,0.1)" stroke-width="1"/>
<line x1="698.36" x2="698.36" y1="978.60" y2="1055.10" stroke="rgba(0,0,0,0.1)" stroke-width="1"/>
<line x1="720.23" x2="720.23" y1="978.60" y2="1055.10" stroke="rgba(0,0,0,0.1)" stroke-width="1"/>
<line x1="742.10" x2="742.10" y1="978.60" y2="1055.10" stroke="rgba(0,0,0,0.1)" stroke-width="1"/>
<line x1="763.98" x2="763.98" y1="978.60" y2="1055.10" stroke="rgba(0,0,0,0.1)" stroke-width="1"/>
<line x1="785.85" x2="785.85" y1="978.60" y2="1055.10" stroke="rgba(0,0,0,0.1)" stroke-width="1"/>
<line x1="807.72" x2="807.72" y1="978.60" y2="1055.10" stroke="rgba(0,0,0,0.1)" stroke-width="1"/>
<line x1="829.59" x2="829.59" y1="978.60" y2="1055.10" stroke="rgba(0,0,0,0.1)" stroke-width="1"/>
<line x1="851.47" x2="851.47" y1="978.60" y2="1055.10" stroke="rgba(0,0,0,0.1)" stroke-width="1"/>
<line x1="873.34" x2="873.34" y1="978.60" y2="1055.10" stroke="rgba(0,0,0,0.1)" stroke-width="1"/>
<line x1="895.21" x2="895.21" y1="978.60" y2="1055.10" stroke="rgba(0,0,0,0.1)" stroke-width="1"/>
<line x1="917.08" x2="917.08" y1="978.60" y2="1055.10" stroke="rgba(0,0,0,0.1)" stroke-width="1"/>
<line x1="938.96" x2="938.96" y1="978.60" y2="1055.10" stroke="rgba(0,0,0,0.1)" stroke-width="1"/>
<line x1="960.83" x2="960.83" y1="978.60" y2="1055.10" stroke="rgba(0,0,0,0.1)" stroke-width="1"/>
<line x1="982.70" x2="982.70" y1="978.60" y2="1055.10" stroke="rgba(0,0,0,0.1)" stroke-width="1"/>
<line x1="1004.57" x2="1004.57" y1="978.60" y2="1055.10" stroke="rgba(0,0,0,0.1)" stroke-width="1"/>
<line x1="1026.45" x2="1026.45" y1="978.60" y2="1055.10" stroke="rgba(0,0,0,0.1)" stroke-width="1"/>
<line x1="1048.32" x2="1048.32" y1="978.60" y2="1055.10" stroke="rgba(0,0,0,0.1)" stroke-width="1"/>
<line x1="1070.19" x2="1070.19" y1="978.60" y2="1055.10" stroke="rgba(0,0,0,0.1)" stroke-width="1"/>
<line x1="1092.06" x2="1092.06" y1="978.60" y2="1055.10" stroke="rgba(0,0,0,0.1)" stroke-width="1"/>
<line x1="1113.94" x2="1113.94" y1="978.60" y2="1055.10" stroke="rgba(0,0,0,0.1)" stroke-width="1"/>
<line x1="1135.81" x2="1135.81" y1="978.60" y2="1055.10" stroke="rgba(0,0,0,0.1)" stroke-width="1"/>
<line x1="1157.68" x2="1157.68" y1="978.60" y2="1055.10" stroke="rgba(0,0,0,0.1)" stroke-width="1"/>
<line x1="1179.55" x2="1179.55" y1="978.60" y2="1055.10" stroke="rgba(0,0,0,0.1)" stroke-width="1"/>
<line x1="1201.43" x2="1201.43" y1="978.60" y2="1055.10" stroke="rgba(0,0,0,0.1)" stroke-width="1"/>
<line x1="1223.30" x2="1223.30" y1="978.60" y2="1055.10" stroke="rgba(0,0,0,0.1)" stroke-width="1"/>
<line x1="1245.17" x2="1245.17" y1="978.60" y2="1055.10" stroke="rgba(0,0,0,0.1)" stroke-width="1"/>
<line x1="1267.04" x2="1267.04" y1="978.60" y2="1055.10" stroke="rgba(0,0,0,0.1)" stroke-width="1"/>
<line x1="1288.92" x2="1288.92" y1="978.60" y2="1055.10" stroke="rgba(0,0,0,0.1)" stroke-width="1"/>
<line x1="1310.79" x2="1310.79" y1="978.60" y2="1055.10" stroke="rgba(0,0,0,0.1)" stroke-width="1"/>
<line x1="1332.66" x2="1332.66" y1="978.60" y2="1055.10" stroke="rgba(0,0,0,0.1)" stroke-width="1"/>
<line x1="1354.53" x2="1354.53" y1="978.60" y2="1055.10" stroke="rgba(0,0,0,0.1)" stroke-width="1"/>
<line x1="1376.41" x2="1376.41" y1="978.60" y2="1055.10" stroke="rgba(0,0,0,0.1)" stroke-width="1"/>
<line x1="1398.28" x2="1398.28" y1="978.60" y2="1055.10" stroke="rgba(0,0,0,0.1)" stroke-width="1"/>
<line x1="1420.15" x2="1420.15" y1="978.60" y2="1055.10" stroke="rgba(0,0,0,0.1)" stroke-width="1"/>
<line x1="1442.02" x2="1442.02" y1="978.60" y2="1055.10" stroke="rgba(0,0,0,0.1)" stroke-width="1"/>
<line x1="1463.90" x2="1463.90" y1="978.60" y2="1055.10" stroke="rgba(0,0,0,0.1)" stroke-width="1"/>
<line x1="1485.77" x2="1485.77" y1="978.60" y2="1055.10" stroke="rgba(0,0,0,0.1)" stroke-width="1"/>
<line x1="1507.64" x2="1507.64" y1="978.60" y2="1055.10" stroke="rgba(0,0,0,0.1)" stroke-width="1"/>
<line x1="1529.51" x2="1529.51" y1="978.60" y2="1055.10" stroke="rgba(0,0,0,0.1)" stroke-width="1"/>
<line x1="1551.39" x2="1551.39" y1="978.60" y2="1055.10" stroke="rgba(0,0,0,0.1)" stroke-width="1"/>
<line x1="1573.26" x2="1573.26" y1="978.60" y2="1055.10" stroke="rgba(0,0,0,0.1)" stroke-width="1"/>
<line x1="1595.13" x2="1595.13" y1="978.60" y2="1055.10" stroke="rgba(0,0,0,0.1)" stroke-width="1"/>
<line x1="1617.00" x2="1617.00" y1="978.60" y2="1055.10" stroke="rgba(0,0,0,0.1)" stroke-width="1"/>
<line x1="1638.88" x2="1638.88" y1="978.60" y2="1055.10" stroke="rgba(0,0,0,0.1)" stroke-width="1"/>
<line x1="1660.75" x2="1660.75" y1="978.60" y2="1055.10" stroke="rgba(0,0,0,0.1)" stroke-width="1"/>
<line x1="1682.62" x2="1682.62" y1="978.60" y2="1055.10" stroke="rgba(0,0,0,0.1)" stroke-width="1"/>
<line x1="1704.49" x2="1704.49" y1="978.60" y2="1055.10" stroke="rgba(0,0,0,0.1)" stroke-width="1"/>
<line x1="1726.37" x2="1726.37" y1="978.60" y2="1055.10" stroke="rgba(0,0,0,0.1)" stroke-width="1"/>
<line x1="1748.24" x2="1748.24" y1="978.60" y2="1055.10" stroke="rgba(0,0,0,0.1)" stroke-width="1"/>
<line x1="1770.11" x2="1770.11" y1="978.60" y2="1055.10" stroke="rgba(0,0,0,0.1)" stroke-width="1"/>
<line x1="1791.98" x2="1791.98" y1="978.60" y2="1055.10" stroke="rgba(0,0,0,0.1)" stroke-width="1"/>
<line x1="1813.86" x2="1813.86" y1="978.60" y2="1055.10" stroke="rgba(0,0,0,0.1)" stroke-width="1"/>
<line x1="1835.73" x2="1835.73" y1="978.60" y2="1055.10" stroke="rgba(0,0,0,0.1)" stroke-width="1"/>
<line x1="1857.60" x2="1857.60" y1="978.60" y2="1055.10" stroke="rgba(0,0,0,0.1)" stroke-width="1"/>
<line x1="338.40" x2="1857.60" y1="978.60" y2="978.60" stroke="rgba(0,0,0,0.1)" stroke-width="1"/>
<line x1="338.40" x2="1857.60" y1="995.23" y2="995.23" stroke="rgba(0,0,0,0.1)" stroke-width="1"/>
<line x1="338.40" x2="1857.60" y1="1011.85" y2="1011.85" stroke="rgba(0,0,0,0.25)" stroke-width="1"/>
<line x1="338.40" x2="1857.60" y1="1028.47" y2="1028.47" stroke="rgba(0,0,0,0.1)" stroke-width="1"/>
<line x1="338.40" x2="1857.60" y1="1045.10" y2="1045.10" stroke="rgba(0,0,0,0.1)" stroke-width="1"/>
<line x1="348.40" x2="348.40" y1="978.60" y2="1045.10" stroke="rgba(0,0,0,0.1)" stroke-width="1"/>
<line x1="348.40" x2="1857.60" y1="1045.10" y2="1045.10" stroke="rgba(0,0,0,0.1)" stroke-width="1"/>
<g clip-path="url(#clipc3)">
<path d="M348.40,1011.85C357.15,1011.85 361.52,1011.85 370.27,1011.85C379.02,1011.85 383.40,1011.85 392.14,1011.85C400.89,1011.85 405.27,1011.85 414.02,1011.85C422.77,1011.85 427.14,1011.85 435.89,1011.85C444.64,1011.85 449.01,1011.85 457.76,1011.85C466.51,1011.85 470.89,1011.85 479.63,1011.85C488.38,1011.85 492.76,1011.85 501.51,1011.85C510.26,1011.85 514.63,1011.85 523.38,1011.85C532.13,1011.85 536.50,1011.85 545.25,1011.85C554.00,1011.85 558.38,1011.85 567.12,1011.85C575.87,1011.85 580.25,1011.85 589.00,1011.85C597.75,1011.85 602.12,1011.85 610.87,1011.85C619.62,1011.85 623.99,1011.85 632.74,1011.85C641.49,1011.85 645.87,1011.85 654.61,1011.85C663.36,1011.85 667.74,1011.85 676.49,1011.85C685.24,1011.85 689.61,1011.85 698.36,1011.85C707.11,1011.85 711.48,1011.85 720.23,1011.85C728.98,1011.85 733.36,1011.85 742.10,1011.85C750.85,1011.85 755.23,1011.85 763.98,1011.85C772.73,1011.85 777.10,1011.85 785.85,1011.85C794.60,1011.85 798.97,1011.85 807.72,1011.85C816.47,1011.85 820.85,1011.85 829.59,1011.85C838.34,1011.85 842.72,1011.85 851.47,1011.85C860.22,1011.85 864.59,1011.85 873.34,1011.85C882.09,1011.85 886.46,1011.85 895.21,1011.85C903.96,1011.85 908.34,1011.85 917.08,1011.85C925.83,1011.85 930.21,1011.85 938.96,1011.85C947.71,1011.85 952.08,1011.85 960.83,1011.85C969.58,1011.85 973.95,1011.85 982.70,1011.85C991.45,1011.85 995.82,1011.85 1004.57,1011.85C1013.32,1011.85 1017.70,1011.85 1026.45,1011.85C1035.20,1011.85 1039.57,1011.85 1048.32,1011.85C1057.07,1011.85 1061.44,1011.85 1070.19,1011.85C1078.94,1011.85 1083.31,1011.85 1092.06,1011.85C1100.81,1011.85 1105.19,1011.85 1113.94,1011.85C1122.69,1011.85 1127.06,1011.85 1135.81,1011.85C1144.56,1011.85 1148.93,1011.85 1157.68,1011.85C1166.43,1011.85 1170.80,1011.85 1179.55,1011.85C1188.30,1011.85 1192.68,1011.85 1201.43,1011.85C1210.18,1011.85 1214.55,1011.85 1223.30,1011.85C1232.05,1011.85 1236.42,1011.85 1245.17,1011.85C1253.92,1011.85 1258.29,1011.85 1267.04,1011.85C1275.79,1011.85 1280.17,1011.85 1288.92,1011.85C1297.66,1011.85 1302.04,1011.85 1310.79,1011.85C1319.54,1011.85 1323.91,1011.85 1332.66,1011.85C1341.41,1011.85 1345.78,1011.85 1354.53,1011.85C1363.28,1011.85 1367.66,1011.85 1376.41,1011.85C1385.15,1011.85 1389.53,1011.85 1398.28,1011.85C1407.03,1011.85 1411.40,1011.85 1420.15,1011.85C1428.90,1011.85 1433.27,1011.85 1442.02,1011.85C1450.77,1011.85 1455.15,1011.85 1463.90,1011.85C1472.64,1011.85 1477.02,1011.85 1485.77,1011.85C1494.52,1011.85 1498.89,1011.85 1507.64,1011.85C1516.39,1011.85 1520.76,1011.85 1529.51,1011.85C1538.26,1011.85 1542.64,1011.85 1551.39,1011.85C1560.13,1011.85 1564.51,1011.85 1573.26,1011.85C1582.01,1011.85 1586.38,1011.85 1595.13,1011.85C1603.88,1011.85 1608.25,1011.85 1617.00,1011.85C1625.75,1011.85 1630.13,1011.85 1638.88,1011.85C1647.62,1011.85 1652.00,1011.85 1660.75,1011.85C1669.50,1011.85 1673.87,1011.85 1682.62,1011.85C1691.37,1011.85 1695.74,1011.85 1704.49,1011.85C1713.24,1011.85 1717.62,1011.85 1726.37,1011.85C1735.11,1011.85 1739.49,1011.85 1748.24,1011.85C1756.99,1011.85 1761.36,1011.85 1770.11,1011.85C1778.86,1011.85 1783.23,1011.85 1791.98,1011.85C1800.73,1011.85 1805.11,1011.85 1813.86,1011.85C1822.60,1011.85 1826.98,1011.85 1835.73,1011.85C1844.48,1011.85 1848.85,1011.85 1857.60,1011.85L1857.60,1011.85L348.40,1011.85Z" fill="rgba(19,193,79,0.5)"/>
<path d="M348.40,1011.85C357.15,1011.85 361.52,1011.85 370.27,1011.85C379.02,1011.85 383.40,1011.85 392.14,1011.85C400.89,1011.85 405.27,1011.85 414.02,1011.85C422.77,1011.85 427.14,1011.85 435.89,1011.85C444.64,1011.85 449.01,1011.85 457.76,1011.85C466.51,1011.85 470.89,1011.85 479.63,1011.85C488.38,1011.85 492.76,1011.85 501.51,1011.85C510.26,1011.85 514.63,1011.85 523.38,1011.85C532.13,1011.85 536.50,1011.85 545.25,1011.85C554.00,1011.85 558.38,1011.85 567.12,1011.85C575.87,1011.85 580.25,1011.85 589.00,1011.85C597.75,1011.85 602.12,1011.85 610.87,1011.85C619.62,1011.85 623.99,1011.85 632.74,1011.85C641.49,1011.85 645.87,1011.85 654.61,1011.85C663.36,1011.85 667.74,1011.85 676.49,1011.85C685.24,1011.85 689.61,1011.85 698.36,1011.85C707.11,1011.85 711.48,1011.85 720.23,1011.85C728.98,1011.85 733.36,1011.85 742.10,1011.85C750.85,1011.85 755.23,1011.85 763.98,1011.85C772.73,1011.85 777.10,1011.85 785.85,1011.85C794.60,1011.85 798.97,1011.85 807.72,1011.85C816.47,1011.85 820.85,1011.85 829.59,1011.85C838.34,1011.85 842.72,1011.85 851.47,1011.85C860.22,1011.85 864.59,1011.85 873.34,1011.85C882.09,1011.85 886.46,1011.85 895.21,1011.85C903.96,1011.85 908.34,1011.85 917.08,1011.85C925.83,1011.85 930.21,1011.85 938.96,1011.85C947.71,1011.85 952.08,1011.85 960.83,1011.85C969.58,1011.85 973.95,1011.85 982.70,1011.85C991.45,1011.85 995.82,1011.85 1004.57,1011.85C1013.32,1011.85 1017.70,1011.85 1026.45,1011.85C1035.20,1011.85 1039.57,1011.85 1048.32,1011.85C1057.07,1011.85 1061.44,1011.85 1070.19,1011.85C1078.94,1011.85 1083.31,1011.85 1092.06,1011.85C1100.81,1011.85 1105.19,1011.85 1113.94,1011.85C1122.69,1011.85 1127.06,1011.85 1135.81,1011.85C1144.56,1011.85 1148.93,1011.85 1157.68,1011.85C1166.43,1011.85 1170.80,1011.85 1179.55,1011.85C1188.30,1011.85 1192.68,1011.85 1201.43,1011.85C1210.18,1011.85 1214.55,1011.85 1223.30,1011.85C1232.05,1011.85 1236.42,1011.85 1245.17,1011.85C1253.92,1011.85 1258.29,1011.85 1267.04,1011.85C1275.79,1011.85 1280.17,1011.85 1288.92,1011.85C1297.66,1011.85 1302.04,1011.85 1310.79,1011.85C1319.54,1011.85 1323.91,1011.85 1332.66,1011.85C1341.41,1011.85 1345.78,1011.85 1354.53,1011.85C1363.28,1011.85 1367.66,1011.85 1376.41,1011.85C1385.15,1011.85 1389.53,1011.85 1398.28,1011.85C1407.03,1011.85 1411.40,1011.85 1420.15,1011.85C1428.90,1011.85 1433.27,1011.85 1442.02,1011.85C1450.77,1011.85 1455.15,1011.85 1463.90,1011.85C1472.64,1011.85 1477.02,1011.85 1485.77,1011.85C1494.52,1011.85 1498.89,1011.85 1507.64,1011.85C1516.39,1011.85 1520.76,1011.85 1529.51,1011.85C1538.26,1011.85 1542.64,1011.85 1551.39,1011.85C1560.13,1011.85 1564.51,1011.85 1573.26,1011.85C1582.01,1011.85 1586.38,1011.85 1595.13,1011.85C1603.88,1011.85 1608.25,1011.85 1617.00,1011.85C1625.75,1011.85 1630.13,1011.85 1638.88,1011.85C1647.62,1011.85 1652.00,1011.85 1660.75,1011.85C1669.50,1011.85 1673.87,1011.85 1682.62,1011.85C1691.37,1011.85 1695.74,1011.85 1704.49,1011.85C1713.24,1011.85 1717.62,1011.85 1726.37,1011.85C1735.11,1011.85 1739.49,1011.85 1748.24,1011.85C1756.99,1011.85 1761.36,1011.85 1770.11,1011.85C1778.86,1011.85 1783.23,1011.85 1791.98,1011.85C1800.73,1011.85 1805.11,1011.85 1813.86,1011.85C1822.60,1011.85 1826.98,1011.85 1835.73,1011.85C1844.48,1011.85 1848.85,1011.85 1857.60,1011.85" fill="none" stroke="rgba(0,0,0,0.1)" stroke-width="3" stroke-linejoin="miter"/>
<path d="M348.40,1011.85C357.15,1011.85 361.52,1011.85 370.27,1011.85C379.02,1011.85 383.40,1011.85 392.14,1011.85C400.89,1011.85 405.27,1011.85 414.02,1011.85C422.77,1011.85 427.14,1011.85 435.89,1011.85C444.64,1011.85 449.01,1011.85 457.76,1011.85C466.51,1011.85 470.89,1011.85 479.63,1011.85C488.38,1011.85 492.76,1011.85 501.51,1011.85C510.26,1011.85 514.63,1011.85 523.38,1011.85C532.13,1011.85 536.50,1011.85 545.25,1011.85C554.00,1011.85 558.38,1011.85 567.12,1011.85C575.87,1011.85 580.25,1011.85 589.00,1011.85C597.75,1011.85 602.12,1011.85 610.87,1011.85C619.62,1011.85 623.99,1011.85 632.74,1011.85C641.49,1011.85 645.87,1011.85 654.61,1011.85C663.36,1011.85 667.74,1011.85 676.49,1011.85C685.24,1011.85 689.61,1011.85 698.36,1011.85C707.11,1011.85 711.48,1011.85 720.23,1011.85C728.98,1011.85 733.36,1011.85 742.10,1011.85C750.85,1011.85 755.23,1011.85 763.98,1011.85C772.73,1011.85 777.10,1011.85 785.85,1011.85C794.60,1011.85 798.97,1011.85 807.72,1011.85C816.47,1011.85 820.85,1011.85 829.59,1011.85C838.34,1011.85 842.72,1011.85 851.47,1011.85C860.22,1011.85 864.59,1011.85 873.34,1011.85C882.09,1011.85 886.46,1011.85 895.21,1011.85C903.96,1011.85 908.34,1011.85 917.08,1011.85C925.83,1011.85 930.21,1011.85 938.96,1011.85C947.71,1011.85 952.08,1011.85 960.83,1011.85C969.58,1011.85 973.95,1011.85 982.70,1011.85C991.45,1011.85 995.82,1011.85 1004.57,1011.85C1013.32,1011.85 1017.70,1011.85 1026.45,1011.85C1035.20,1011.85 1039.57,1011.85 1048.32,1011.85C1057.07,1011.85 1061.44,1011.85 1070.19,1011.85C1078.94,1011.85 1083.31,1011.85 1092.06,1011.85C1100.81,1011.85 1105.19,1011.85 1113.94,1011.85C1122.69,1011.85 1127.06,1011.85 1135.81,1011.85C1144.56,1011.85 1148.93,1011.85 1157.68,1011.85C1166.43,1011.85 1170.80,1011.85 1179.55,1011.85C1188.30,1011.85 1192.68,1011.85 1201.43,1011.85C1210.18,1011.85 1214.55,1011.85 1223.30,1011.85C1232.05,1011.85 1236.42,1011.85 1245.17,1011.85C1253.92,1011.85 1258.29,1011.85 1267.04,1011.85C1275.79,1011.85 1280.17,1011.85 1288.92,1011.85C1297.66,1011.85 1302.04,1011.85 1310.79,1011.85C1319.54,1011.85 1323.91,1011.85 1332.66,1011.85C1341.41,1011.85 1345.78,1011.85 1354.53,1011.85C1363.28,1011.85 1367.66,1011.85 1376.41,1011.85C1385.15,1011.85 1389.53,1011.85 1398.28,1011.85C1407.03,1011.85 1411.40,1011.85 1420.15,1011.85C1428.90,1011.85 1433.27,1011.85 1442.02,1011.85C1450.77,1011.85 1455.15,1011.85 1463.90,1011.85C1472.64,1011.85 1477.02,1011.85 1485.77,1011.85C1494.52,1011.85 1498.89,1011.85 1507.64,1011.85C1516.39,1011.85 1520.76,1011.85 1529.51,1011.85C1538.26,1011.85 1542.64,1011.85 1551.39,1011.85C1560.13,1011.85 1564.51,1011.85 1573.26,1011.85C1582.01,1011.85 1586.38,1011.85 1595.13,1011.85C1603.88,1011.85 1608.25,1011.85 1617.00,1011.85C1625.75,1011.85 1630.13,1011.85 1638.88,1011.85C1647.62,1011.85 1652.00,1011.85 1660.75,1011.85C1669.50,1011.85 1673.87,1011.85 1682.62,1011.85C1691.37,1011.85 1695.74,1011.85 1704.49,1011.85C1713.24,1011.85 1717.62,1011.85 1726.37,1011.85C1735.11,1011.85 1739.49,1011.85 1748.24,1011.85C1756.99,1011.85 1761.36,1011.85 1770.11,1011.85C1778.86,1011.85 1783.23,1011.85 1791.98,1011.85C1800.73,1011.85 1805.11,1011.85 1813.86,1011.85C1822.60,1011.85 1826.98,1011.85 1835.73,1011.85C1844.48,1011.85 1848.85,1011.85 1857.60,1011.85L1857.60,1011.85L348.40,1011.85Z" fill="rgba(23,177,227,0.5)"/>
<path d="M348.40,1011.85C357.15,1011.85 361.52,1011.85 370.27,1011.85C379.02,1011.85 383.40,1011.85 392.14,1011.85C400.89,1011.85 405.27,1011.85 414.02,1011.85C422.77,1011.85 427.14,1011.85 435.89,1011.85C444.64,1011.85 449.01,1011.85 457.76,1011.85C466.51,1011.85 470.89,1011.85 479.63,1011.85C488.38,1011.85 492.76,1011.85 501.51,1011.85C510.26,1011.85 514.63,1011.85 523.38,1011.85C532.13,1011.85 536.50,1011.85 545.25,1011.85C554.00,1011.85 558.38,1011.85 567.12,1011.85C575.87,1011.85 580.25,1011.85 589.00,1011.85C597.75,1011.85 602.12,1011.85 610.87,1011.85C619.62,1011.85 623.99,1011.85 632.74,1011.85C641.49,1011.85 645.87,1011.85 654.61,1011.85C663.36,1011.85 667.74,1011.85 676.49,1011.85C685.24,1011.85 689.61,1011.85 698.36,1011.85C707.11,1011.85 711.48,1011.85 720.23,1011.85C728.98,1011.85 733.36,1011.85 742.10,1011.85C750.85,1011.85 755.23,1011.85 763.98,1011.85C772.73,1011.85 777.10,1011.85 785.85,1011.85C794.60,1011.85 798.97,1011.85 807.72,1011.85C816.47,1011.85 820.85,1011.85 829.59,1011.85C838.34,1011.85 842.72,1011.85 851.47,1011.85C860.22,1011.85 864.59,1011.85 873.34,1011.85C882.09,1011.85 886.46,1011.85 895.21,1011.85C903.96,1011.85 908.34,1011.85 917.08,1011.85C925.83,1011.85 930.21,1011.85 938.96,1011.85C947.71,1011.85 952.08,1011.85 960.83,1011.85C969.58,1011.85 973.95,1011.85 982.70,1011.85C991.45,1011.85 995.82,1011.85 1004.57,1011.85C1013.32,1011.85 1017.70,1011.85 1026.45,1011.85C1035.20,1011.85 1039.57,1011.85 1048.32,1011.85C1057.07,1011.85 1061.44,1011.85 1070.19,1011.85C1078.94,1011.85 1083.31,1011.85 1092.06,1011.85C1100.81,1011.85 1105.19,1011.85 1113.94,1011.85C1122.69,1011.85 1127.06,1011.85 1135.81,1011.85C1144.56,1011.85 1148.93,1011.85 1157.68,1011.85C1166.43,1011.85 1170.80,1011.85 1179.55,1011.85C1188.30,1011.85 1192.68,1011.85 1201.43,1011.85C1210.18,1011.85 1214.55,1011.85 1223.30,1011.85C1232.05,1011.85 1236.42,1011.85 1245.17,1011.85C1253.92,1011.85 1258.29,1011.85 1267.04,1011.85C1275.79,1011.85 1280.17,1011.85 1288.92,1011.85C1297.66,1011.85 1302.04,1011.85 1310.79,1011.85C1319.54,1011.85 1323.91,1011.85 1332.66,1011.85C1341.41,1011.85 1345.78,1011.85 1354.53,1011.85C1363.28,1011.85 1367.66,1011.85 1376.41,1011.85C1385.15,1011.85 1389.53,1011.85 1398.28,1011.85C1407.03,1011.85 1411.40,1011.85 1420.15,1011.85C1428.90,1011.85 1433.27,1011.85 1442.02,1011.85C1450.77,1011.85 1455.15,1011.85 1463.90,1011.85C1472.64,1011.85 1477.02,1011.85 1485.77,1011.85C1494.52,1011.85 1498.89,1011.85 1507.64,1011.85C1516.39,1011.85 1520.76,1011.85 1529.51,1011.85C1538.26,1011.85 1542.64,1011.85 1551.39,1011.85C1560.13,1011.85 1564.51,1011.85 1573.26,1011.85C1582.01,1011.85 1586.38,1011.85 1595.13,1011.85C1603.88,1011.85 1608.25,1011.85 1617.00,1011.85C1625.75,1011.85 1630.13,1011.85 1638.88,1011.85C1647.62,1011.85 1652.00,1011.85 1660.75,1011.85C1669.50,1011.85 1673.87,1011.85 1682.62,1011.85C1691.37,1011.85 1695.74,1011.85 1704.49,1011.85C1713.24,1011.85 1717.62,1011.85 1726.37,1011.85C1735.11,1011.85 1739.49,1011.85 1748.24,1011.85C1756.99,1011.85 1761.36,1011.85 1770.11,1011.85C1778.86,1011.85 1783.23,1011.85 1791.98,1011.85C1800.73,1011.85 1805.11,1011.85 1813.86,1011.85C1822.60,1011.85 1826.98,1011.85 1835.73,1011.85C1844.48,1011.85 1848.85,1011.85 1857.60,1011.85" fill="none" stroke="rgba(0,0,0,0.1)" stroke-width="3" stroke-linejoin="miter"/>
</g>
<text x="337.90" y="981.05" text-anchor="end">1.0</text>
<text x="337.90" y="997.68" text-anchor="end">0.5</text>
<text x="337.90" y="1014.30" text-anchor="end">0</text>
<text x="337.90" y="1030.92" text-anchor="end">-0.5</text>
<text x="337.90" y="1047.55" text-anchor="end">-1.0</text>
<text transform="translate(347.90,1054.20) rotate(-50)" text-anchor="end" y="4.2">19:22</text>
<text transform="translate(369.77,1054.20) rotate(-50)" text-anchor="end" y="4.2">19:23</text>
<text transform="translate(391.64,1054.20) rotate(-50)" text-anchor="end" y="4.2">19:24</text>
<text transform="translate(413.52,1054.20) rotate(-50)" text-anchor="end" y="4.2">19:25</text>
<text transform="translate(435.39,1054.20) rotate(-50)" text-anchor="end" y="4.2">19:26</text>
<text transform="translate(457.26,1054.20) rotate(-50)" text-anchor="end" y="4.2">19:27</text>
<text transform="translate(479.13,1054.20) rotate(-50)" text-anchor="end" y="4.2">19:28</text>
<text transform="translate(501.01,1054.20) rotate(-50)" text-anchor="end" y="4.2">19:29</text>
<text transform="translate(522.88,1054.20) rotate(-50)" text-anchor="end" y="4.2">19:30</text>
<text transform="translate(544.75,1054.20) rotate(-50)" text-anchor="end" y="4.2">19:31</text>
<text transform="translate(566.62,1054.20) rotate(-50)" text-anchor="end" y="4.2">19:32</text>
<text transform="translate(588.50,1054.20) rotate(-50)" text-anchor="end" y="4.2">19:33</text>
<text transform="translate(610.37,1054.20) rotate(-50)" text-anchor="end" y="4.2">19:34</text>
<text transform="translate(632.24,1054.20) rotate(-50)" text-anchor="end" y="4.2">19:35</text>
<text transform="translate(654.11,1054.20) rotate(-50)" text-anchor="end" y="4.2">19:36</text>
<text transform="translate(675.99,1054.20) rotate(-50)" text-anchor="end" y="4.2">19:37</text>
<text transform="translate(697.86,1054.20) rotate(-50)" text-anchor="end" y="4.2">19:38</text>
<text transform="translate(719.73,1054.20) rotate(-50)" text-anchor="end" y="4.2">19:39</text>
<text transform="translate(741.60,1054.20) rotate(-50)" text-anchor="end" y="4.2">19:40</text>
<text transform="translate(763.48,1054.20) rotate(-50)" text-anchor="end" y="4.2">19:41</text>
<text transform="translate(785.35,1054.20) rotate(-50)" text-anchor="end" y="4.2">19:42</text>
<text transform="translate(807.22,1054.20) rotate(-50)" text-anchor="end" y="4.2">19:43</text>
<text transform="translate(829.09,1054.20) rotate(-50)" text-anchor="end" y="4.2">19:44</text>
<text transform="translate(850.97,1054.20) rotate(-50)" text-anchor="end" y="4.2">19:45</text>
<text transform="translate(872.84,1054.20) rotate(-50)" text-anchor="end" y="4.2">19:46</text>
<text transform="translate(894.71,1054.20) rotate(-50)" text-anchor="end" y="4.2">19:47</text>
<text transform="translate(916.58,1054.20) rotate(-50)" text-anchor="end" y="4.2">19:48</text>
<text transform="translate(938.46,1054.20) rotate(-50)" text-anchor="end" y="4.2">19:49</text>
<text transform="translate(960.33,1054.20) rotate(-50)" text-anchor="end" y="4.2">19:50</text>
<text transform="translate(982.20,1054.20) rotate(-50)" text-anchor="end" y="4.2">19:51</text>
<text transform="translate(1004.07,1054.20) rotate(-50)" text-anchor="end" y="4.2">19:52</text>
<text transform="translate(1025.95,1054.20) rotate(-50)" text-anchor="end" y="4.2">19:53</text>
<text transform="translate(1047.82,1054.20) rotate(-50)" text-anchor="end" y="4.2">19:54</text>
<text transform="translate(1069.69,1054.20) rotate(-50)" text-anchor="end" y="4.2">19:55</text>
<text transform="translate(1091.56,1054.20) rotate(-50)" text-anchor="end" y="4.2">19:56</text>
<text transform="translate(1113.44,1054.20) rotate(-50)" text-anchor="end" y="4.2">19:57</text>
<text transform="translate(1135.31,1054.20) rotate(-50)" text-anchor="end" y="4.2">19:58</text>
<text transform="translate(1157.18,1054.20) rotate(-50)" text-anchor="end" y="4.2">19:59</text>
<text transform="translate(1179.05,1054.20) rotate(-50)" text-anchor="end" y="4.2">20:00</text>
<text transform="translate(1200.93,1054.20) rotate(-50)" text-anchor="end" y="4.2">20:01</text>
<text transform="translate(1222.80,1054.20) rotate(-50)" text-anchor="end" y="4.2">20:02</text>
<text transform="translate(1244.67,1054.20) rotate(-50)" text-anchor="end" y="4.2">20:03</text>
<text transform="translate(1266.54,1054.20) rotate(-50)" text-anchor="end" y="4.2">20:04</text>
<text transform="translate(1288.42,1054.20) rotate(-50)" text-anchor="end" y="4.2">20:05</text>
<text transform="translate(1310.29,1054.20) rotate(-50)" text-anchor="end" y="4.2">20:06</text>
<text transform="translate(1332.16,1054.20) rotate(-50)" text-anchor="end" y="4.2">20:07</text>
<text transform="translate(1354.03,1054.20) rotate(-50)" text-anchor="end" y="4.2">20:08</text>
<text transform="translate(1375.91,1054.20) rotate(-50)" text-anchor="end" y="4.2">20:09</text>
<text transform="translate(1397.78,1054.20) rotate(-50)" text-anchor="end" y="4.2">20:10</text>
<text transform="translate(1419.65,1054.20) rotate(-50)" text-anchor="end" y="4.2">20:11</text>
<text transform="translate(1441.52,1054.20) rotate(-50)" text-anchor="end" y="4.2">20:12</text>
<text transform="translate(1463.40,1054.20) rotate(-50)" text-anchor="end" y="4.2">20:13</text>
<text transform="translate(1485.27,1054.20) rotate(-50)" text-anchor="end" y="4.2">20:14</text>
<text transform="translate(1507.14,1054.20) rotate(-50)" text-anchor="end" y="4.2">20:15</text>
<text transform="translate(1529.01,1054.20) rotate(-50)" text-anchor="end" y="4.2">20:16</text>
<text transform="translate(1550.89,1054.20) rotate(-50)" text-anchor="end" y="4.2">20:17</text>
<text transform="translate(1572.76,1054.20) rotate(-50)" text-anchor="end" y="4.2">20:18</text>
<text transform="translate(1594.63,1054.20) rotate(-50)" text-anchor="end" y="4.2">20:19</text>
<text transform="translate(1616.50,1054.20) rotate(-50)" text-anchor="end" y="4.2">20:20</text>
<text transform="translate(1638.38,1054.20) rotate(-50)" text-anchor="end" y="4.2">20:21</text>
<text transform="translate(1660.25,1054.20) rotate(-50)" text-anchor="end" y="4.2">20:22</text>
<text transform="translate(1682.12,1054.20) rotate(-50)" text-anchor="end" y="4.2">20:23</text>
<text transform="translate(1703.99,1054.20) rotate(-50)" text-anchor="end" y="4.2">20:24</text>
<text transform="translate(1725.87,1054.20) rotate(-50)" text-anchor="end" y="4.2">20:25</text>
<text transform="translate(1747.74,1054.20) rotate(-50)" text-anchor="end" y="4.2">20:26</text>
<text transform="translate(1769.61,1054.20) rotate(-50)" text-anchor="end" y="4.2">20:27</text>
<text transform="translate(1791.48,1054.20) rotate(-50)" text-anchor="end" y="4.2">20:28</text>
<text transform="translate(1813.36,1054.20) rotate(-50)" text-anchor="end" y="4.2">20:29</text>
<text transform="translate(1835.23,1054.20) rotate(-50)" text-anchor="end" y="4.2">20:30</text>
<text transform="translate(1857.10,1054.20) rotate(-50)" text-anchor="end" y="4.2">20:31</text>
<rect x="1000" y="955.6" width="40" height="12" fill="rgba(23,177,227,0.5)" stroke="rgba(0,0,0,0.1)" stroke-width="3"/>
<text x="1046.3" y="964.6">Netin</text>
<rect x="1084.2" y="955.6" width="40" height="12" fill="rgba(19,193,79,0.5)" stroke="rgba(0,0,0,0.1)" stroke-width="3"/>
<text x="1130.3" y="964.6">Netout</text>
</g>
</svg>
<div class="t" style="left:99.30px;top:77.97px;font-size:12.2px;line-height:18px;font-weight:400;color:#111;letter-spacing:-0.575px;-webkit-text-stroke:0.2px #111;">Harald Lichowski</div>
<div class="t" style="left:195.70px;top:75.25px;font-size:14px;line-height:21px;font-weight:400;color:#555;letter-spacing:1.011px;">[2]</div>
<div class="t" style="left:96.10px;top:96.86px;font-size:13.4px;line-height:20px;font-weight:400;color:#bdbdbd;letter-spacing:0.108px;">Admin</div>
<div class="t" style="left:60.70px;top:154.94px;font-size:14.6px;line-height:22px;font-weight:400;color:#fff;letter-spacing:0.468px;">Server bestellen +</div>
<div class="t" style="left:71.40px;top:215.93px;font-size:12.6px;line-height:19px;font-weight:400;color:#4a4a4a;letter-spacing:0.572px;">Dashboard</div>
<div class="t" style="left:71.40px;top:268.13px;font-size:12.6px;line-height:19px;font-weight:400;color:#2f8de4;letter-spacing:-0.099px;">Server</div>
<div class="t" style="left:80.20px;top:311.83px;font-size:12.6px;line-height:19px;font-weight:400;color:#4a4a4a;letter-spacing:0.799px;">speed-test</div>
<div class="t" style="left:80.20px;top:348.03px;font-size:12.6px;line-height:19px;font-weight:400;color:#4a4a4a;letter-spacing:0.860px;">test-charge</div>
<div class="t" style="left:80.20px;top:383.93px;font-size:12.6px;line-height:19px;font-weight:400;color:#4a4a4a;letter-spacing:0.700px;">test-server-delete</div>
<div class="t" style="left:80.20px;top:420.03px;font-size:12.6px;line-height:19px;font-weight:400;color:#4a4a4a;letter-spacing:0.830px;">test-create</div>
<div class="t" style="left:80.20px;top:455.93px;font-size:12.6px;line-height:19px;font-weight:400;color:#4a4a4a;letter-spacing:0.812px;">test-dark</div>
<div class="t" style="left:80.20px;top:492.13px;font-size:12.6px;line-height:19px;font-weight:400;color:#2f8de4;letter-spacing:0.518px;">reverse-proxy</div>
<div class="t" style="left:71.30px;top:536.23px;font-size:12.6px;line-height:19px;font-weight:400;color:#4a4a4a;letter-spacing:0.096px;">Tickets</div>
<div class="t" style="left:71.30px;top:588.23px;font-size:12.6px;line-height:19px;font-weight:400;color:#4a4a4a;letter-spacing:0.385px;">Rechnungen</div>
<div class="t" style="left:71.30px;top:640.23px;font-size:12.6px;line-height:19px;font-weight:400;color:#4a4a4a;letter-spacing:0.625px;">Guthaben</div>
<div class="t" style="left:16.40px;top:675.43px;font-size:12.6px;line-height:19px;font-weight:400;color:#212529;letter-spacing:0.624px;">Admin</div>
<div class="t" style="left:71.30px;top:710.23px;font-size:12.6px;line-height:19px;font-weight:400;color:#4a4a4a;letter-spacing:0.096px;">Tickets</div>
<div class="t" style="left:71.30px;top:762.23px;font-size:12.6px;line-height:19px;font-weight:400;color:#4a4a4a;letter-spacing:-0.019px;">Server</div>
<div class="t" style="left:71.30px;top:814.23px;font-size:12.6px;line-height:19px;font-weight:400;color:#4a4a4a;letter-spacing:0.447px;">Nutzerverwaltung</div>
<div class="t" style="left:71.30px;top:866.23px;font-size:12.6px;line-height:19px;font-weight:400;color:#4a4a4a;letter-spacing:0.256px;">Einstellungen</div>
<div class="t" style="left:1665.00px;top:24.77px;font-size:12.2px;line-height:18px;font-weight:400;color:#fff;letter-spacing:-0.575px;">Harald Lichowski</div>
<div class="t" style="left:1870.30px;top:10.82px;font-size:11.5px;line-height:17px;font-weight:700;color:#fff;letter-spacing:0.000px;">4</div>
<div class="t" style="left:299.50px;top:110.79px;font-size:31.5px;line-height:47px;font-weight:400;color:#212529;letter-spacing:1.578px;-webkit-text-stroke:0.7px #212529;">reverse-proxy</div>
<div class="t" style="left:327.30px;top:170.75px;font-size:16.6px;line-height:25px;font-weight:400;color:#212529;letter-spacing:0.735px;">debian 10 cloudinit template</div>
<div class="t" style="left:1101.30px;top:115.55px;font-size:16.6px;line-height:25px;font-weight:400;color:#212529;letter-spacing:0.328px;">Status: <span style="color:#1e9a1e">Online</span></div>
<div class="t" style="left:1772.50px;top:175.94px;font-size:14.6px;line-height:22px;font-weight:400;color:#fff;letter-spacing:0.679px;">Neustarten</div>
<div class="t" style="left:311.20px;top:285.99px;font-size:18.8px;line-height:28px;font-weight:400;color:#212529;letter-spacing:0.593px;-webkit-text-stroke:0.35px #212529;">General:</div>
<div class="t" style="left:311.20px;top:319.33px;font-size:12.6px;line-height:19px;font-weight:400;color:#212529;letter-spacing:-0.031px;"><b>Kerne</b>: 1</div>
<div class="t" style="left:311.20px;top:338.33px;font-size:12.6px;line-height:19px;font-weight:400;color:#212529;letter-spacing:0.085px;"><b>RAM</b>: 1024MB / 1.00 GB</div>
<div class="t" style="left:311.20px;top:357.33px;font-size:12.6px;line-height:19px;font-weight:400;color:#212529;letter-spacing:-0.090px;"><b>Disk</b>: 10GB</div>
<div class="t" style="left:1129.20px;top:285.99px;font-size:18.8px;line-height:28px;font-weight:400;color:#212529;letter-spacing:0.880px;-webkit-text-stroke:0.35px #212529;">Network Information:</div>
<div class="t" style="left:1129.20px;top:319.33px;font-size:12.6px;line-height:19px;font-weight:400;color:#212529;letter-spacing:-0.184px;"><b>ipv4:</b> 192.168.1.6</div>
<div class="t" style="left:311.80px;top:1177.69px;font-size:18.8px;line-height:28px;font-weight:400;color:#212529;letter-spacing:1.217px;-webkit-text-stroke:0.35px #212529;">Terminal</div>
<div class="t" style="left:335.00px;top:1215.94px;font-size:14.6px;line-height:22px;font-weight:400;color:#fff;letter-spacing:0.649px;">Terminal öffnen</div>
<div class="t" style="left:357.30px;top:1350.94px;font-size:14.6px;line-height:22px;font-weight:400;color:#fff;letter-spacing:0.290px;">Zurücksetzen</div>
<div class="t" style="left:348.50px;top:1399.94px;font-size:14.6px;line-height:22px;font-weight:400;color:#fff;letter-spacing:0.202px;">Löschen</div>
<div class="t" style="left:423.90px;top:1401.93px;font-size:12.6px;line-height:19px;font-weight:400;color:#212529;letter-spacing:0.366px;">Der Server wird unwiderruflich gelöscht</div>
<div class="t" style="left:1627.00px;top:1542.93px;font-size:12.6px;line-height:19px;font-weight:400;color:#212529;letter-spacing:0.497px;">Version: 3.0.0. Hand-crafted &amp; made with</div>
</div>
</body>
</html>
